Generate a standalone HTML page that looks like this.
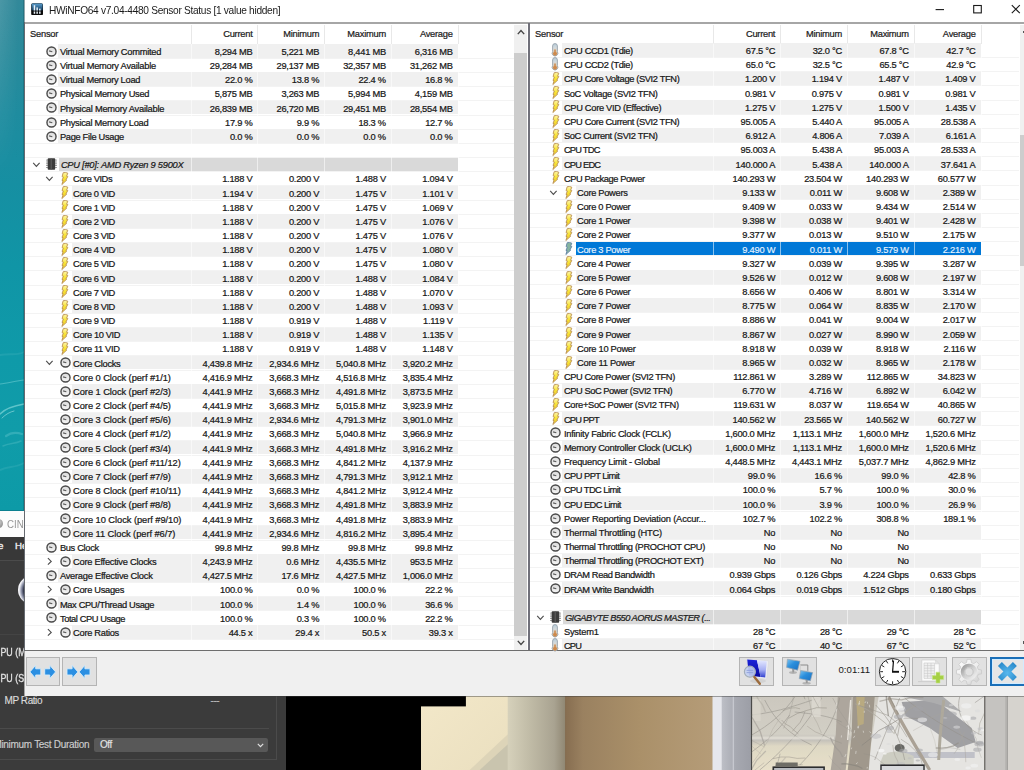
<!DOCTYPE html>
<html lang="en"><head><meta charset="utf-8"><title>HWiNFO64 v7.04-4480 Sensor Status</title>
<style>
html,body{margin:0;padding:0;background:#000;}
#root{position:relative;width:1024px;height:770px;overflow:hidden;background:#3b3b3b;font-family:"Liberation Sans","DejaVu Sans",sans-serif;}
#root div,#root svg{position:absolute;}
#win{left:0;top:0;width:1024px;height:770px;}
.wbg{left:24.3px;top:0;width:1000px;height:696.3px;background:#f0f0f0;}
.t{font-size:9.3px;letter-spacing:-0.25px;line-height:14.2px;height:14.2px;white-space:pre;color:#161616;-webkit-text-stroke:.22px #161616;}
.t.v{text-align:right;}
.t.it{font-style:italic;color:#1c1c1c;}
.t.w{color:#e8f4ff;-webkit-text-stroke:.15px #e8f4ff;}
.t.hdr{color:#1e1e1e;}
.st{background:#f0f0f0;}
.hd{background:#d9d9d9;}
.sel{background:#0078d7;}
.gl{height:1px;background:#f3f3f3;}
.cs{width:1px;background:rgba(255,255,255,.55);}
.hs{width:1px;background:#e8e8e8;}
.i{overflow:visible;}
.tb{background:#e1e1e1;box-shadow:inset 0 0 0 1px #b4b4b4;}
.tb.foc{background:#e6e6e6;box-shadow:inset 0 0 0 2px #1a6fb8,inset 0 0 0 3px #d2ecff;}
.cb{font-size:10px;line-height:14px;height:14px;white-space:pre;color:#dadada;letter-spacing:-.44px;-webkit-text-stroke:.15px currentColor;}
.cbb{font-size:10.2px;letter-spacing:0;transform:scaleX(.87);transform-origin:0 0;color:#e2e2e2;-webkit-text-stroke:.3px #e2e2e2;}

</style></head><body>
<div id="root">
<!-- desktop wallpaper strip -->
<div id="sea" style="left:0;top:0;width:25px;height:511.2px;background:linear-gradient(180deg,#32899a 0%,#2a8a9b 10%,#1f8c9f 22%,#168fa2 36%,#1095a6 52%,#0f9aa9 70%,#109ca9 85%,#0d9aa7 100%)"></div>
<div style="left:0;top:0;width:25px;height:180px;background:linear-gradient(90deg,rgba(255,255,255,.12),rgba(255,255,255,0) 75%);-webkit-mask-image:linear-gradient(180deg,#000,transparent);mask-image:linear-gradient(180deg,#000,transparent)"></div>
<svg style="left:0;top:330px" width="25" height="181" viewBox="0 330 25 181">
<g fill="none" stroke-linecap="round">
<path d="M0 384 C8 383,16 381,24 380" stroke="#5fc4cc" stroke-width="1.1" opacity=".7"/>
<path d="M0 414 C5 409,12 406,24 404" stroke="#7ad2d6" stroke-width="1.6" opacity=".75"/>
<path d="M2 418 C6 414,10 412,14 411" stroke="#a4e0e2" stroke-width="1" opacity=".6"/>
<path d="M6 436 C10 433,16 432,22 434" stroke="#4fbcc4" stroke-width="2.2" opacity=".55"/>
<path d="M3 446 C9 443,15 444,21 441" stroke="#48b8c0" stroke-width="1.6" opacity=".5"/>
<path d="M0 470 C8 466,15 468,24 463" stroke="#3ab0ba" stroke-width="2" opacity=".4"/>
<path d="M0 355 C10 353,18 356,24 352" stroke="#38acb8" stroke-width="2" opacity=".4"/>
</g></svg>
<div style="left:22.6px;top:0;width:1.6px;height:511px;background:linear-gradient(90deg,rgba(0,40,50,0),rgba(0,40,50,.45))"></div>
<!-- cinebench window behind -->
<div style="left:0;top:510.2px;width:25px;height:1.1px;background:#0c8090"></div>
<div style="left:0;top:511.2px;width:25px;height:26px;background:#fcfcfc"></div>
<div style="left:-5px;top:519px;width:8px;height:9px;border-radius:50%;background:radial-gradient(circle at 40% 35%,#d8d8d8,#777)"></div>
<div style="left:6.6px;top:517.7px;font-size:10.3px;line-height:14px;color:#969696;white-space:pre;transform:scaleX(.94);transform-origin:0 0">CINEBENCH R23.200</div>
<div style="left:0;top:537.2px;width:300px;height:23px;background:#383838"></div>
<div style="left:-17.2px;top:538.9px;width:20.4px;text-align:right;font-size:9.7px;line-height:14px;color:#f0f0f0;white-space:pre;-webkit-text-stroke:.35px #f0f0f0;letter-spacing:-.1px">File</div>
<div style="left:15px;top:538.9px;font-size:9.7px;line-height:14px;color:#f0f0f0;white-space:pre;-webkit-text-stroke:.35px #f0f0f0;letter-spacing:-.1px">Help</div>
<div style="left:0;top:560.2px;width:300px;height:1px;background:#4b4b4b"></div>
<div style="left:0;top:561.2px;width:286px;height:210px;background:#3b3b3b"></div>
<div style="left:17.6px;top:575.6px;width:28px;height:28px;border-radius:50%;background:radial-gradient(circle at 62% 52%,#1c2238 0%,#10142a 48%,#8e93a8 62%,#f4f4f8 72%)"></div>
<div style="left:0;top:634px;width:286px;height:1px;background:#444"></div>
<div class="cb cbb" style="left:-5.9px;top:646.3px">CPU (Multi Core)</div>
<div class="cb cbb" style="left:-5.9px;top:672px">CPU (Single Core)</div>
<div class="cb" style="left:4.6px;top:693.6px">MP Ratio</div>
<div class="cb" style="left:210.6px;top:693.6px;color:#b8b8b8">---</div>
<div style="left:0;top:728px;width:268.5px;height:1px;background:#4b4b4b"></div>
<div style="left:0;top:759px;width:277px;height:1px;background:#4b4b4b"></div>
<div style="left:276.2px;top:640px;width:1px;height:119.5px;background:#4b4b4b"></div>
<div class="cb" style="left:-30px;width:119.2px;text-align:right;top:738.2px;color:#cdcdcd;letter-spacing:-.3px">Minimum Test Duration</div>
<div style="left:94.4px;top:737.9px;width:173.2px;height:13.8px;border-radius:2.2px;background:#585858"></div>
<div class="cb" style="left:100px;top:738.2px;color:#e4e4e4">Off</div>
<svg style="left:256.8px;top:742.6px" width="7" height="5" viewBox="0 0 7 5"><path d="M0.8 0.8 L3.5 3.6 L6.2 0.8" fill="none" stroke="#e0e0e0" stroke-width="1.2"/></svg>
<!-- black area -->
<div style="left:286px;top:560px;width:135.3px;height:211px;background:#000"></div>
<!-- photo -->
<svg id="photo" style="left:421.3px;top:690px" width="603" height="80" viewBox="421.3 690 603 80" preserveAspectRatio="none">
<defs>
<linearGradient id="pc" x1="0" y1="0" x2="1" y2="0"><stop offset="0" stop-color="#d6d1bb"/><stop offset=".35" stop-color="#c2bda8"/><stop offset=".8" stop-color="#a9a391"/><stop offset="1" stop-color="#8f8672"/></linearGradient>
<linearGradient id="pb" x1="0" y1="0" x2="1" y2="0"><stop offset="0" stop-color="#866d50"/><stop offset=".12" stop-color="#9a8160"/><stop offset=".5" stop-color="#aa9069"/><stop offset="1" stop-color="#b59c78"/></linearGradient>
<linearGradient id="pf" x1="0" y1="0" x2="1" y2="0"><stop offset="0" stop-color="#bdbfc6"/><stop offset=".5" stop-color="#a6a8b0"/><stop offset="1" stop-color="#9c9ea6"/></linearGradient>
<linearGradient id="ps" x1="0" y1="0" x2="0" y2="1"><stop offset="0" stop-color="#c6c2b8"/><stop offset=".55" stop-color="#cfcbc0"/><stop offset=".62" stop-color="#bdbab4"/><stop offset=".7" stop-color="#dcd5bf"/><stop offset="1" stop-color="#e6dec6"/></linearGradient>
<linearGradient id="pcr" x1="0" y1="0" x2="1" y2="1"><stop offset="0" stop-color="#f3e8c9"/><stop offset="1" stop-color="#eadfbf"/></linearGradient>
<clipPath id="scn"><rect x="752.4" y="690" width="232" height="80"/></clipPath>
</defs>
<rect x="421.3" y="690" width="90" height="80" fill="url(#pcr)"/>
<path d="M478 770 L508.5 742 L508.5 770 Z" fill="#c9c4ae"/>
<path d="M470 770 L508.5 734 L508.5 744 L480 770 Z" fill="#ddd4b8"/>
<rect x="421.3" y="690" width="44.9" height="16.4" fill="#000"/>
<rect x="508" y="690" width="58" height="80" fill="url(#pc)"/>
<rect x="565.4" y="690" width="148" height="80" fill="url(#pb)"/>
<rect x="712.8" y="690" width="9.6" height="80" fill="#e6e7ec"/>
<rect x="722" y="690" width="29.6" height="80" fill="url(#pf)"/>
<rect x="733" y="690" width="1.2" height="80" fill="#c9cbd2"/>
<!-- outside scene -->
<rect x="751.2" y="690" width="233.6" height="80" fill="url(#ps)"/>
<rect x="751.2" y="690" width="1.2" height="80" fill="#4a4a48"/>
<!-- right snowy part -->
<path d="M880 690 H984.8 V770 H868 L872 740 Z" fill="#e3e2df"/>
<path d="M902 702 L936 700 L972 728 L976 742 L958 748 L930 728 L906 716 Z" fill="#8b8b90" opacity=".85"/>
<path d="M900 696 L940 694 L962 712 L934 703 Z" fill="#a6a6a8"/>
<path d="M905 752 H975 V758 H905 Z" fill="#a9adb8" opacity=".7"/>
<ellipse cx="900" cy="748" rx="5" ry="4" fill="#5c5c58"/>
<path d="M884 754 q14 -6 30 2 v8 h-34 z" fill="#c9c9bd"/>
<!-- trunks -->
<path d="M838 697 L852 697 L850 730 L846 770 L831 770 L836 735 Z" fill="#a69f95"/>
<path d="M853 697 L875 697 L872 735 L869 770 L848 770 L852 735 Z" fill="#989083"/>
<path d="M856.5 697 H865 L864 724 L858 726 Z" fill="#b3a376"/>
<path d="M848 740 L851 700" stroke="#e6e2da" stroke-width="1.4"/>
<path d="M889 697 C 897 715, 912 740, 930 770" stroke="#a39a8c" stroke-width="3.2" fill="none"/>
<path d="M944 700 C 942 720, 940 735, 939 760" stroke="#a8a294" stroke-width="3" fill="none"/>
<!-- branches -->
<g stroke="#8d8981" stroke-width="0.8" fill="none" opacity=".7">
<path d="M752 715 C 780 712, 800 704, 822 697"/><path d="M752 735 C 770 725, 785 712, 795 697"/>
<path d="M760 770 C 790 745, 810 720, 822 698"/><path d="M800 765 C 820 745, 835 720, 840 698"/>
<path d="M795 712 C 815 714, 830 716, 842 722"/><path d="M765 700 C 775 720, 790 735, 812 745"/>
<path d="M876 705 C 890 720, 900 735, 905 760"/><path d="M875 760 C 885 735, 893 715, 900 698"/>
<path d="M905 698 C 925 715, 950 730, 980 745"/><path d="M960 697 C 955 715, 968 730, 982 735"/>
<path d="M752 752 C 765 742, 775 735, 790 715"/>
</g>
<rect x="753" y="699" width="8" height="22" fill="#d7d3c8" opacity=".8"/><rect x="812" y="697" width="9" height="20" fill="#d9d6cc" opacity=".85"/><rect x="752.4" y="736.5" width="82" height="3" fill="#dedbd2" opacity=".8"/><g id="xb" clip-path="url(#scn)"><path d="M827.1 708.0 L817.0 707.7 L807.2 710.4 L797.6 713.5 L788.7 718.4" stroke="#8a857c" stroke-width="0.80" opacity="0.67" fill="none"/><path d="M879.8 701.3 L890.7 698.7 L901.7 699.8 L912.6 697.3 L923.7 697.7" stroke="#8a857c" stroke-width="1.30" opacity="0.55" fill="none"/><path d="M819.2 707.5 L812.9 696.1 L805.6 685.3 L798.6 674.2 L788.7 665.7" stroke="#8a857c" stroke-width="0.70" opacity="0.55" fill="none"/><path d="M765.8 712.0 L762.8 704.9 L758.2 698.6 L754.9 691.5 L749.8 685.6" stroke="#a39e94" stroke-width="1.30" opacity="0.48" fill="none"/><path d="M821.7 733.1 L817.5 723.1 L812.2 713.6 L810.0 702.9 L807.2 692.4" stroke="#8a857c" stroke-width="0.60" opacity="0.53" fill="none"/><path d="M975.2 702.7 L985.9 695.2 L996.5 687.4 L1008.5 682.3 L1021.6 681.2" stroke="#7f7a72" stroke-width="0.80" opacity="0.56" fill="none"/><path d="M862.0 745.5 L870.9 738.5 L878.9 730.6 L889.0 725.5 L898.6 719.5" stroke="#7f7a72" stroke-width="1.00" opacity="0.60" fill="none"/><path d="M893.7 733.0 L886.1 723.4 L876.5 715.9 L866.4 709.0 L855.3 703.7" stroke="#a39e94" stroke-width="1.00" opacity="0.67" fill="none"/><path d="M783.8 728.4 L789.8 714.9 L793.3 700.4 L794.0 685.6 L794.6 670.7" stroke="#96918a" stroke-width="1.00" opacity="0.40" fill="none"/><path d="M888.7 716.2 L887.7 707.9 L886.7 699.5 L886.5 691.2 L887.3 682.8" stroke="#7f7a72" stroke-width="1.30" opacity="0.68" fill="none"/><path d="M764.5 762.7 L754.4 770.7 L743.7 777.7 L735.5 787.7 L730.7 799.6" stroke="#a39e94" stroke-width="1.00" opacity="0.49" fill="none"/><path d="M800.4 708.8 L796.1 707.8 L791.6 708.0 L787.2 709.2 L783.0 710.7" stroke="#8a857c" stroke-width="0.70" opacity="0.68" fill="none"/><path d="M899.2 766.7 L898.0 761.2 L895.4 756.1 L893.8 750.6 L893.1 744.9" stroke="#a39e94" stroke-width="1.00" opacity="0.52" fill="none"/><path d="M863.0 747.5 L854.4 735.9 L848.1 722.8 L839.9 710.9 L833.0 698.1" stroke="#96918a" stroke-width="0.80" opacity="0.59" fill="none"/><path d="M773.1 758.7 L781.2 757.0 L789.4 757.0 L797.5 758.4 L805.7 758.0" stroke="#7f7a72" stroke-width="0.70" opacity="0.57" fill="none"/><path d="M807.5 726.2 L815.5 731.8 L824.4 735.5 L833.0 739.9 L842.1 743.3" stroke="#8a857c" stroke-width="0.60" opacity="0.63" fill="none"/><path d="M939.6 749.8 L944.8 748.8 L950.1 747.7 L955.4 748.4 L960.6 749.5" stroke="#96918a" stroke-width="0.60" opacity="0.51" fill="none"/><path d="M752.4 763.4 L760.2 752.6 L767.8 741.7 L772.8 729.4 L780.1 718.4" stroke="#a39e94" stroke-width="0.60" opacity="0.62" fill="none"/><path d="M829.1 755.5 L834.0 762.7 L840.4 768.6 L845.0 776.0 L847.8 784.2" stroke="#96918a" stroke-width="0.60" opacity="0.41" fill="none"/><path d="M785.9 757.3 L780.6 763.6 L774.4 768.9 L769.9 775.7 L764.3 781.7" stroke="#96918a" stroke-width="1.30" opacity="0.36" fill="none"/><path d="M784.3 769.0 L789.0 768.0 L793.5 766.4 L798.1 765.0 L802.9 764.7" stroke="#7f7a72" stroke-width="0.70" opacity="0.53" fill="none"/><path d="M766.1 751.0 L757.0 760.3 L750.5 771.7 L747.0 784.3 L743.4 796.8" stroke="#a39e94" stroke-width="1.30" opacity="0.64" fill="none"/><path d="M954.5 753.7 L957.9 748.7 L959.7 742.9 L962.2 737.3 L964.8 731.8" stroke="#a39e94" stroke-width="0.70" opacity="0.57" fill="none"/><path d="M863.9 753.7 L870.3 755.1 L876.3 757.7 L881.3 761.8 L886.5 765.8" stroke="#8a857c" stroke-width="0.60" opacity="0.53" fill="none"/><path d="M894.1 733.9 L898.0 725.5 L901.9 717.1 L908.0 710.1 L915.8 705.2" stroke="#a39e94" stroke-width="1.30" opacity="0.53" fill="none"/><path d="M966.1 762.2 L965.7 753.3 L964.8 744.5 L962.3 736.0 L958.5 727.9" stroke="#a39e94" stroke-width="1.00" opacity="0.46" fill="none"/><path d="M780.4 753.7 L778.3 761.8 L773.8 768.8 L769.8 776.1 L765.8 783.5" stroke="#96918a" stroke-width="0.80" opacity="0.69" fill="none"/><path d="M981.7 757.8 L978.3 748.4 L976.5 738.7 L971.5 730.1 L966.9 721.3" stroke="#a39e94" stroke-width="0.80" opacity="0.42" fill="none"/><path d="M854.2 698.3 L859.7 690.1 L867.6 684.1 L873.5 676.2 L878.1 667.5" stroke="#8a857c" stroke-width="0.60" opacity="0.69" fill="none"/><path d="M761.2 753.9 L754.4 748.1 L747.8 742.0 L742.2 735.1 L734.8 730.0" stroke="#a39e94" stroke-width="0.80" opacity="0.40" fill="none"/><path d="M765.3 747.2 L752.6 740.7 L738.5 738.2 L725.4 732.2 L712.1 726.7" stroke="#7f7a72" stroke-width="0.60" opacity="0.38" fill="none"/><path d="M830.7 737.4 L833.0 742.8 L836.1 747.7 L840.3 751.8 L843.0 757.0" stroke="#96918a" stroke-width="1.30" opacity="0.68" fill="none"/><path d="M897.9 735.8 L899.9 724.4 L898.2 713.0 L892.8 702.7 L887.4 692.5" stroke="#7f7a72" stroke-width="0.80" opacity="0.63" fill="none"/><path d="M978.9 734.5 L980.1 723.2 L984.9 712.8 L988.3 701.9 L989.5 690.6" stroke="#a39e94" stroke-width="1.00" opacity="0.54" fill="none"/><path d="M805.3 711.5 L803.1 717.0 L800.4 722.4 L796.4 726.8 L792.6 731.4" stroke="#8a857c" stroke-width="0.80" opacity="0.64" fill="none"/><path d="M764.9 745.6 L760.5 731.5 L753.2 718.8 L744.0 707.4 L731.4 699.8" stroke="#96918a" stroke-width="1.30" opacity="0.59" fill="none"/><path d="M836.5 721.0 L840.3 724.0 L844.4 726.7 L848.5 729.3 L852.6 731.9" stroke="#96918a" stroke-width="0.80" opacity="0.47" fill="none"/><path d="M798.6 733.8 L794.4 730.4 L790.6 726.6 L785.8 724.0 L782.0 720.1" stroke="#8a857c" stroke-width="1.00" opacity="0.49" fill="none"/><path d="M950.0 708.3 L940.6 713.7 L930.8 718.1 L922.9 725.4 L913.4 730.6" stroke="#a39e94" stroke-width="0.80" opacity="0.40" fill="none"/><path d="M958.9 742.8 L953.8 745.8 L948.0 747.3 L942.1 748.1 L936.1 748.0" stroke="#8a857c" stroke-width="1.30" opacity="0.64" fill="none"/><path d="M805.3 699.3 L803.4 694.0 L802.2 688.5 L800.9 683.1 L797.9 678.4" stroke="#8a857c" stroke-width="1.00" opacity="0.57" fill="none"/><path d="M937.1 751.6 L934.9 740.4 L931.0 729.7 L928.8 718.5 L924.4 707.9" stroke="#a39e94" stroke-width="0.60" opacity="0.44" fill="none"/><path d="M923.6 768.2 L921.1 759.0 L916.0 751.0 L909.1 744.4 L901.2 739.2" stroke="#8a857c" stroke-width="0.80" opacity="0.57" fill="none"/><path d="M924.4 719.2 L919.4 718.4 L914.2 718.3 L909.1 718.2 L903.9 718.2" stroke="#8a857c" stroke-width="0.80" opacity="0.59" fill="none"/><path d="M860.2 705.7 L874.2 710.4 L888.1 715.3 L899.6 724.6 L907.3 737.2" stroke="#8a857c" stroke-width="1.00" opacity="0.45" fill="none"/><path d="M841.7 763.9 L847.2 763.8 L852.5 764.9 L857.9 766.0 L862.7 768.5" stroke="#7f7a72" stroke-width="1.30" opacity="0.68" fill="none"/><ellipse cx="952.0" cy="713.9" rx="5.1" ry="2.5" fill="#9c9ca0" opacity=".55"/><ellipse cx="918.6" cy="708.6" rx="5.3" ry="2.6" fill="#9c9ca0" opacity=".55"/><ellipse cx="919.8" cy="750.1" rx="3.4" ry="1.7" fill="#9c9ca0" opacity=".55"/><ellipse cx="910.1" cy="758.3" rx="1.9" ry="1.0" fill="#b8b8bc" opacity=".55"/><ellipse cx="966.6" cy="705.8" rx="5.2" ry="2.6" fill="#f4f4f4" opacity=".55"/><ellipse cx="973.4" cy="718.2" rx="3.2" ry="1.6" fill="#9c9ca0" opacity=".55"/><ellipse cx="918.1" cy="760.5" rx="2.2" ry="1.1" fill="#9c9ca0" opacity=".55"/><ellipse cx="957.6" cy="759.4" rx="2.9" ry="1.5" fill="#f4f4f4" opacity=".55"/><ellipse cx="966.1" cy="717.9" rx="5.2" ry="2.6" fill="#ffffff" opacity=".55"/><ellipse cx="980.9" cy="728.8" rx="3.0" ry="1.5" fill="#b8b8bc" opacity=".55"/><ellipse cx="960.8" cy="728.2" rx="2.0" ry="1.0" fill="#9c9ca0" opacity=".55"/><ellipse cx="974.6" cy="765.7" rx="3.9" ry="1.9" fill="#f4f4f4" opacity=".55"/><ellipse cx="881.3" cy="750.5" rx="3.5" ry="1.8" fill="#ffffff" opacity=".55"/><ellipse cx="945.6" cy="717.9" rx="2.1" ry="1.0" fill="#d8d8d8" opacity=".55"/><ellipse cx="889.7" cy="731.5" rx="3.1" ry="1.6" fill="#b8b8bc" opacity=".55"/><ellipse cx="903.6" cy="750.9" rx="4.2" ry="2.1" fill="#9c9ca0" opacity=".55"/><ellipse cx="946.8" cy="719.0" rx="3.9" ry="1.9" fill="#9c9ca0" opacity=".55"/><ellipse cx="888.9" cy="744.0" rx="2.2" ry="1.1" fill="#d8d8d8" opacity=".55"/><ellipse cx="973.8" cy="733.3" rx="2.7" ry="1.3" fill="#b8b8bc" opacity=".55"/><ellipse cx="983.6" cy="729.8" rx="2.4" ry="1.2" fill="#ffffff" opacity=".55"/><ellipse cx="902.4" cy="709.8" rx="3.9" ry="1.9" fill="#b8b8bc" opacity=".55"/><ellipse cx="901.8" cy="715.9" rx="3.9" ry="2.0" fill="#f4f4f4" opacity=".55"/><ellipse cx="957.0" cy="727.1" rx="3.4" ry="1.7" fill="#d8d8d8" opacity=".55"/><ellipse cx="898.7" cy="716.7" rx="4.6" ry="2.3" fill="#9c9ca0" opacity=".55"/><ellipse cx="906.0" cy="767.6" rx="2.4" ry="1.2" fill="#d8d8d8" opacity=".55"/><ellipse cx="933.2" cy="754.7" rx="4.9" ry="2.5" fill="#f4f4f4" opacity=".55"/><ellipse cx="905.3" cy="715.1" rx="3.3" ry="1.7" fill="#9c9ca0" opacity=".55"/><ellipse cx="922.6" cy="719.8" rx="4.8" ry="2.4" fill="#f4f4f4" opacity=".55"/><ellipse cx="889.7" cy="728.0" rx="4.6" ry="2.3" fill="#9c9ca0" opacity=".55"/><ellipse cx="980.6" cy="732.8" rx="2.2" ry="1.1" fill="#d8d8d8" opacity=".55"/><ellipse cx="968.4" cy="768.0" rx="2.8" ry="1.4" fill="#f4f4f4" opacity=".55"/><ellipse cx="900.2" cy="708.1" rx="5.3" ry="2.7" fill="#f4f4f4" opacity=".55"/><ellipse cx="977.7" cy="749.7" rx="4.2" ry="2.1" fill="#9c9ca0" opacity=".55"/><ellipse cx="885.2" cy="753.7" rx="1.9" ry="1.0" fill="#ffffff" opacity=".55"/><ellipse cx="901.1" cy="764.2" rx="4.2" ry="2.1" fill="#b8b8bc" opacity=".55"/><ellipse cx="979.9" cy="742.7" rx="3.8" ry="1.9" fill="#9c9ca0" opacity=".55"/><ellipse cx="951.4" cy="705.2" rx="2.2" ry="1.1" fill="#d8d8d8" opacity=".55"/><ellipse cx="977.9" cy="711.0" rx="2.8" ry="1.4" fill="#d8d8d8" opacity=".55"/><ellipse cx="876.1" cy="736.2" rx="5.4" ry="2.7" fill="#b8b8bc" opacity=".55"/><ellipse cx="979.6" cy="744.1" rx="5.0" ry="2.5" fill="#9c9ca0" opacity=".55"/><path d="M855.1 735.8 l-1.4 2.3" stroke="#e9e6df" stroke-width="0.8" opacity=".7"/><path d="M860.0 700.9 l-0.9 3.3" stroke="#e9e6df" stroke-width="0.8" opacity=".7"/><path d="M859.9 702.8 l-0.8 2.3" stroke="#e9e6df" stroke-width="0.8" opacity=".7"/><path d="M848.8 732.0 l0.6 2.9" stroke="#e9e6df" stroke-width="0.8" opacity=".7"/><path d="M848.5 725.1 l-1.5 2.1" stroke="#e9e6df" stroke-width="0.8" opacity=".7"/><path d="M867.8 701.8 l-0.0 1.9" stroke="#e9e6df" stroke-width="0.8" opacity=".7"/><path d="M864.6 710.8 l-0.1 2.0" stroke="#e9e6df" stroke-width="0.8" opacity=".7"/><path d="M869.6 704.7 l0.4 2.7" stroke="#e9e6df" stroke-width="0.8" opacity=".7"/><path d="M869.9 731.4 l1.2 1.6" stroke="#e9e6df" stroke-width="0.8" opacity=".7"/><path d="M857.8 762.5 l-1.3 1.5" stroke="#e9e6df" stroke-width="0.8" opacity=".7"/><path d="M857.8 726.5 l0.6 1.9" stroke="#e9e6df" stroke-width="0.8" opacity=".7"/><path d="M852.0 747.6 l-0.6 1.7" stroke="#e9e6df" stroke-width="0.8" opacity=".7"/><path d="M837.2 708.8 l-0.9 2.8" stroke="#e9e6df" stroke-width="0.8" opacity=".7"/><path d="M855.0 730.2 l-0.6 3.0" stroke="#e9e6df" stroke-width="0.8" opacity=".7"/><path d="M867.6 766.9 l-0.2 1.7" stroke="#e9e6df" stroke-width="0.8" opacity=".7"/><path d="M837.1 702.7 l-0.2 3.3" stroke="#e9e6df" stroke-width="0.8" opacity=".7"/><path d="M856.4 750.9 l-0.4 3.0" stroke="#e9e6df" stroke-width="0.8" opacity=".7"/><path d="M846.3 754.1 l-1.2 2.9" stroke="#e9e6df" stroke-width="0.8" opacity=".7"/><path d="M841.8 735.4 l-0.2 2.1" stroke="#e9e6df" stroke-width="0.8" opacity=".7"/><path d="M863.5 730.7 l0.4 2.0" stroke="#e9e6df" stroke-width="0.8" opacity=".7"/><path d="M859.0 725.7 l-0.4 2.4" stroke="#e9e6df" stroke-width="0.8" opacity=".7"/><path d="M866.1 701.4 l-0.9 1.6" stroke="#e9e6df" stroke-width="0.8" opacity=".7"/></g>
<rect x="752.4" y="690" width="232" height="80" fill="#fff" opacity=".08"/>
<!-- monitors at bottom edge -->
<rect x="772.8" y="766.4" width="52.4" height="5" fill="#2c2c2e"/><rect x="774.4" y="768" width="49.2" height="3" fill="#b9bbc0"/>
<rect x="880.6" y="764.4" width="44.4" height="7" fill="#2c2c2e"/><rect x="882" y="766" width="41.6" height="5" fill="#d8d9dc"/>
<rect x="776" y="762.5" width="22" height="4" fill="#6f6d66"/>
<!-- right frame -->
<rect x="984.4" y="690" width="1.2" height="80" fill="#6e6c68"/>
<rect x="985.6" y="690" width="21.4" height="80" fill="#c5c3c0"/>
<rect x="1005.6" y="690" width="2.4" height="80" fill="#b3b1ae"/>
<rect x="1008" y="690" width="17" height="80" fill="#d6d3ce"/>
</svg>

<div id="win">
<svg width="0" height="0" style="left:0;top:0"><defs><linearGradient id="bg" x1="0" y1="0" x2="0" y2="1"><stop offset="0" stop-color="#fff7ae"/><stop offset=".45" stop-color="#f8e436"/><stop offset=".8" stop-color="#f2d22c"/><stop offset="1" stop-color="#e2a646"/></linearGradient><linearGradient id="cg" x1="0" y1="0" x2="0" y2="1"><stop offset="0" stop-color="#dadada"/><stop offset="1" stop-color="#f6f6f6"/></linearGradient><linearGradient id="tg" x1="0" y1="0" x2="0" y2="1"><stop offset="0" stop-color="#b6ccda"/><stop offset=".35" stop-color="#d4dadc"/><stop offset=".6" stop-color="#dcd4c4"/><stop offset="1" stop-color="#d9a672"/></linearGradient></defs></svg>
<div class="wbg"></div>
<div id="wsh" style="left:24.3px;top:696.1px;width:1000px;height:1px;background:rgba(60,60,60,.45)"></div>
<!-- title bar -->
<div style="left:24.3px;top:0;width:1000px;height:22.2px;background:#fff"></div>
<svg style="left:31.4px;top:2.8px" width="12.2" height="12.6" viewBox="0 0 12.2 12.6">
<defs><linearGradient id="hw" x1="0" y1="0" x2="0" y2="1"><stop offset="0" stop-color="#5a9fd0"/><stop offset="1" stop-color="#123a5c"/></linearGradient></defs>
<rect x="0.2" y="0.2" width="11.8" height="12.2" rx="1.6" fill="#0a0a0a"/>
<rect x="0.6" y="0.5" width="11" height="7.2" rx="1.2" fill="url(#hw)"/>
<rect x="2.7" y="2.2" width="1.5" height="8.6" fill="#e8f2fa"/><rect x="5.4" y="4.4" width="1.5" height="6.4" fill="#e8f2fa"/><rect x="8.1" y="5.6" width="1.5" height="5.2" fill="#e8f2fa"/>
<rect x="0.6" y="7.6" width="11" height="0.9" fill="#0a0a0a"/>
</svg>
<div style="left:48.7px;top:2.6px;font-size:10.8px;line-height:14px;height:14px;white-space:pre;color:#1a1a1a;letter-spacing:-0.325px;transform:scaleX(.94);transform-origin:0 0" id="ttl">HWiNFO64 v7.04-4480 Sensor Status [1 value hidden]</div>
<!-- window buttons -->
<svg style="left:930px;top:0" width="94" height="20" viewBox="0 0 94 20">
<path d="M5.6 9.6 H14" stroke="#1a1a1a" stroke-width="1.1" fill="none"/>
<rect x="43.7" y="5.5" width="7.6" height="7.4" stroke="#1a1a1a" stroke-width="1.1" fill="none"/>
<path d="M81.8 5.2 L89.8 13.2 M89.8 5.2 L81.8 13.2" stroke="#1a1a1a" stroke-width="1.1" fill="none"/>
</svg>
<!-- list frames -->
<div style="left:24.3px;top:22px;width:1000px;height:1.9px;background:#a6a6a6"></div>
<div style="left:24.3px;top:23.9px;width:503.8px;height:626.4px;background:#fff"></div>
<div style="left:529.8px;top:23.9px;width:495px;height:626.4px;background:#fff"></div>
<div style="left:528.1px;top:23px;width:1.7px;height:627.6px;background:#70707a"></div>
<div style="left:24.3px;top:650.1px;width:1000px;height:1.1px;background:#6e6e6e"></div>
<div style="left:23.7px;top:0;width:1.3px;height:22px;background:#8ea6ab"></div>
<div style="left:23.7px;top:22px;width:1.4px;height:628.6px;background:#666a70"></div>
<div style="left:23.7px;top:650.6px;width:1.2px;height:45.8px;background:#a4a4a4"></div>
<!-- left scrollbar -->
<div style="left:514px;top:24.5px;width:13.2px;height:625.6px;background:#f0f0f0"></div>
<div style="left:514px;top:52.7px;width:13.2px;height:583.2px;background:#cdcdcd"></div>
<svg style="left:516.8px;top:28.6px" width="8" height="6" viewBox="0 0 8 6"><path d="M0.8 5.1 L4 1.6 L7.2 5.1" fill="none" stroke="#444" stroke-width="1.4"/></svg>
<svg style="left:516.8px;top:640.4px" width="8" height="6" viewBox="0 0 8 6"><path d="M0.8 0.9 L4 4.4 L7.2 0.9" fill="none" stroke="#444" stroke-width="1.4"/></svg>
<!-- right scrollbar (cropped) -->
<div style="left:1019.6px;top:24.5px;width:5px;height:625.6px;background:#f0f0f0"></div>
<div style="left:1019.6px;top:134.6px;width:5px;height:131.2px;background:#cdcdcd"></div>
<div style="left:1022.6px;top:30.5px;width:2px;height:2.6px;background:#555"></div>
<div style="left:1022.6px;top:641px;width:2px;height:2.6px;background:#555"></div>
<!-- toolbar buttons -->
<div class="tb" style="left:25.6px;top:656.8px;width:34.1px;height:28.9px"></div>
<div class="tb" style="left:62px;top:656.8px;width:34.6px;height:28.9px"></div>
<div class="tb" style="left:739px;top:656.8px;width:35px;height:28.9px"></div>
<div class="tb" style="left:782.3px;top:656.8px;width:35.2px;height:28.9px"></div>
<div class="tb" style="left:875px;top:656.8px;width:34.9px;height:28.9px"></div>
<div class="tb" style="left:912.4px;top:656.8px;width:35px;height:28.9px"></div>
<div class="tb" style="left:951.5px;top:656.8px;width:35px;height:28.9px"></div>
<div class="tb foc" style="left:989.8px;top:656.8px;width:36px;height:28.9px"></div>
<div style="left:838.4px;top:663.2px;font-size:9.6px;line-height:14px;height:14px;white-space:pre;color:#1a1a1a;letter-spacing:0.05px" id="tmr">0:01:11</div>
<!-- TBICONS -->
<svg style="left:0;top:652px" width="1024" height="40" viewBox="0 652 1024 40">
<defs>
<linearGradient id="gg" x1="0" y1="0" x2="1" y2="1"><stop offset="0" stop-color="#fdfdfd"/><stop offset=".6" stop-color="#ececec"/><stop offset="1" stop-color="#c4c4c4"/></linearGradient>
<linearGradient id="gr" x1="0" y1="0" x2="1" y2="1"><stop offset="0" stop-color="#9a9a9a"/><stop offset=".5" stop-color="#cfcfcf"/><stop offset="1" stop-color="#f0f0f0"/></linearGradient>
<radialGradient id="gx" cx="0.55" cy="0.55" r="0.6"><stop offset="0" stop-color="#58b8ee"/><stop offset="1" stop-color="#2686c8"/></radialGradient>
<linearGradient id="gs1" x1="0" y1="0" x2="0" y2="1"><stop offset="0" stop-color="#e4e8ff"/><stop offset=".55" stop-color="#a8b0f4"/><stop offset="1" stop-color="#3040d0"/></linearGradient>
<linearGradient id="gs2" x1="0" y1="0" x2="0" y2="1"><stop offset="0" stop-color="#1a22d8"/><stop offset="1" stop-color="#0808a0"/></linearGradient>
<linearGradient id="gm" x1="0" y1="0" x2="1" y2="1"><stop offset="0" stop-color="#7cc4f0"/><stop offset=".45" stop-color="#2a8edc"/><stop offset="1" stop-color="#1a6fc0"/></linearGradient>
</defs>
<path d="M29.9 671.9 L35.7 665.3 L35.7 668.8 L40.8 668.8 L40.8 675.0 L35.7 675.0 L35.7 678.5 Z M55.6 671.9 L49.8 665.3 L49.8 668.8 L44.7 668.8 L44.7 675.0 L49.8 675.0 L49.8 678.5 Z M77.9 671.9 L72.1 665.3 L72.1 668.8 L67.0 668.8 L67.0 675.0 L72.1 675.0 L72.1 678.5 Z M79.1 671.9 L84.9 665.3 L84.9 668.8 L90.0 668.8 L90.0 675.0 L84.9 675.0 L84.9 678.5 Z" fill="#2b8fe2" stroke="#d6ecfb" stroke-width="0.9" stroke-linejoin="round"/>
<!-- summary icon -->
<ellipse cx="758" cy="681" rx="8" ry="2.2" fill="#d2d2d2"/>
<path d="M746.8 659 L768.6 660.8 L766.6 679.2 L748.6 676.8 Z" fill="#eeeef2" stroke="#d4d4da" stroke-width=".5"/>
<path d="M747.2 659.6 L757 660.3 L760.6 676.9 L749 675.6 Z" fill="url(#gs2)"/>
<path d="M757 660.3 L766.8 661.2 L765.2 677.4 L760.6 676.9 Z" fill="url(#gs1)"/>
<path d="M754.2 676.8 L759.8 683.8" stroke="#9c6b3c" stroke-width="2.4" stroke-linecap="round"/>
<circle cx="749.9" cy="671.7" r="5.5" fill="#c3d0f2" fill-opacity=".9" stroke="#a3adb8" stroke-width="1.2"/>
<path d="M746.6 670.4 H753.2 M746.6 672.6 H753.2" stroke="#8ea0dc" stroke-width="0.9"/>
<!-- network monitors -->
<path d="M800.3 665 H807.8 V671" stroke="#8a8a8a" stroke-width="1" fill="none"/>
<path d="M800.3 665 V671 H807.8" stroke="#c8c8c8" stroke-width="0.8" fill="none"/>
<ellipse cx="793" cy="672.6" rx="4" ry="1.3" fill="#b4b4b4"/><path d="M792 668 L794.6 668 L794 672.4 L792.4 672.4Z" fill="#9a9a9a"/>
<path d="M787.4 659.2 L800 661.2 L797.6 670.2 L786.6 667.4 Z" fill="url(#gm)" stroke="#9aa4ae" stroke-width="0.7"/>
<ellipse cx="806.6" cy="683.2" rx="4.2" ry="1.3" fill="#b4b4b4"/><path d="M805.4 679 L808 679 L807.6 683 L806 683Z" fill="#9a9a9a"/>
<path d="M800.6 670.6 L812.6 672.6 L810.4 680.8 L799.2 678.6 Z" fill="url(#gm)" stroke="#9aa4ae" stroke-width="0.7"/>
<!-- clock -->
<circle cx="892.6" cy="671.7" r="13.2" fill="#fff" stroke="#222" stroke-width="1"/><path d="M892.60 659.30 L892.60 662.10 M898.80 660.96 L897.40 663.39 M903.34 665.50 L900.91 666.90 M905.00 671.70 L902.20 671.70 M903.34 677.90 L900.91 676.50 M898.80 682.44 L897.40 680.01 M892.60 684.10 L892.60 681.30 M886.40 682.44 L887.80 680.01 M881.86 677.90 L884.29 676.50 M880.20 671.70 L883.00 671.70 M881.86 665.50 L884.29 666.90 M886.40 660.96 L887.80 663.39 " stroke="#2a2a2a" stroke-width="1" fill="none"/><path d="M892.6 671.7 L893.5 660.6" stroke="#111" stroke-width="1.2" fill="none"/><path d="M892.0 671.8 H899" stroke="#111" stroke-width="1.9" fill="none"/>
<!-- doc -->
<path d="M918 681.6 H940" stroke="#cfcfcf" stroke-width="1.2"/>
<path d="M921.8 660 H935.4 L939.2 663.8 V681 H921.8 Z" fill="#fbfbfb" stroke="#d0d0d0" stroke-width="0.7"/>
<path d="M935.4 660 V663.8 H939.2 Z" fill="#e2e2e2" stroke="#cfcfcf" stroke-width="0.5"/>
<path d="M924 663 H934.6 V678.4 H924 Z M924 665.6 H934.6 M924 668.2 H934.6 M924 670.8 H934.6 M924 673.4 H934.6 M924 676 H934.6 M927.6 663 V678.4 M931 663 V678.4" fill="#f0f0f0" stroke="#c9c9c9" stroke-width="0.6"/>
<path d="M936 672.2 H940 V675.6 H943.6 V679.6 H940 V683 H936 V679.6 H932.4 V675.6 H936 Z" fill="#a6d044" stroke="#c8e48c" stroke-width="0.6"/>
<!-- gear -->
<path d="M981.56 670.00 L981.56 673.80 L978.28 674.37 L977.31 676.71 L979.22 679.44 L976.54 682.12 L973.81 680.21 L971.47 681.18 L970.90 684.46 L967.10 684.46 L966.53 681.18 L964.19 680.21 L961.46 682.12 L958.78 679.44 L960.69 676.71 L959.72 674.37 L956.44 673.80 L956.44 670.00 L959.72 669.43 L960.69 667.09 L958.78 664.36 L961.46 661.68 L964.19 663.59 L966.53 662.62 L967.10 659.34 L970.90 659.34 L971.47 662.62 L973.81 663.59 L976.54 661.68 L979.22 664.36 L977.31 667.09 L978.28 669.43 Z" fill="url(#gg)" stroke="#c9c9c9" stroke-width="0.8" stroke-linejoin="round"/><circle cx="969.0" cy="671.9" r="6.4" fill="none" stroke="url(#gr)" stroke-width="3.6"/><circle cx="969.0" cy="671.9" r="4.2" fill="#e1e1e1" stroke="#aaa" stroke-width="0.6"/>
<!-- close X -->
<g transform="translate(1007.4 671.5) rotate(45)"><path d="M-10.6 -2.8 H-2.8 V-10.6 H2.8 V-2.8 H10.6 V2.8 H2.8 V10.6 H-2.8 V2.8 H-10.6 Z" fill="url(#gx)"/></g>
</svg>

<!-- left list -->
<div class="t hdr" style="left:30.1px;top:27.3px">Sensor</div>
<div class="t hdr v" style="left:191.2px;top:27.3px;width:61.3px">Current</div>
<div class="t hdr v" style="left:257.9px;top:27.3px;width:61.3px">Minimum</div>
<div class="t hdr v" style="left:324.6px;top:27.3px;width:61.3px">Maximum</div>
<div class="t hdr v" style="left:391.3px;top:27.3px;width:61.3px">Average</div>
<div class="hs" style="left:190.7px;top:25.0px;height:19.0px"></div>
<div class="hs" style="left:257.4px;top:25.0px;height:19.0px"></div>
<div class="hs" style="left:324.1px;top:25.0px;height:19.0px"></div>
<div class="hs" style="left:390.8px;top:25.0px;height:19.0px"></div>
<div class="hs" style="left:457.5px;top:25.0px;height:19.0px"></div>
<div class="gl" style="left:25.1px;top:57.82px;width:488.7px"></div>
<div class="st" style="left:58.3px;top:44.15px;width:399.7px;height:13.57px"></div>
<svg class="i" style="left:46.30px;top:45.65px" width="11" height="11" viewBox="0 0 11 11"><circle cx="5.5" cy="5.5" r="4.55" fill="url(#cg)" stroke="#484848" stroke-width="1.4"/><path d="M3.1 4.9 L6.3 5.7" stroke="#5c5c5c" stroke-width="1.1" fill="none"/></svg>
<div class="t" style="left:59.9px;top:44.90px;letter-spacing:-0.265px">Virtual Memory Commited</div>
<div class="t v" style="left:191.2px;top:44.90px;width:61.3px">8,294 MB</div>
<div class="t v" style="left:257.9px;top:44.90px;width:61.3px">5,221 MB</div>
<div class="t v" style="left:324.6px;top:44.90px;width:61.3px">8,441 MB</div>
<div class="t v" style="left:391.3px;top:44.90px;width:61.3px">6,316 MB</div>
<div class="gl" style="left:25.1px;top:71.99px;width:488.7px"></div>
<svg class="i" style="left:46.30px;top:59.82px" width="11" height="11" viewBox="0 0 11 11"><circle cx="5.5" cy="5.5" r="4.55" fill="url(#cg)" stroke="#484848" stroke-width="1.4"/><path d="M3.1 4.9 L6.3 5.7" stroke="#5c5c5c" stroke-width="1.1" fill="none"/></svg>
<div class="t" style="left:59.9px;top:59.07px;letter-spacing:-0.247px">Virtual Memory Available</div>
<div class="t v" style="left:191.2px;top:59.07px;width:61.3px">29,284 MB</div>
<div class="t v" style="left:257.9px;top:59.07px;width:61.3px">29,137 MB</div>
<div class="t v" style="left:324.6px;top:59.07px;width:61.3px">32,357 MB</div>
<div class="t v" style="left:391.3px;top:59.07px;width:61.3px">31,262 MB</div>
<div class="gl" style="left:25.1px;top:86.16px;width:488.7px"></div>
<div class="st" style="left:58.3px;top:72.49px;width:399.7px;height:13.57px"></div>
<svg class="i" style="left:46.30px;top:73.99px" width="11" height="11" viewBox="0 0 11 11"><circle cx="5.5" cy="5.5" r="4.55" fill="url(#cg)" stroke="#484848" stroke-width="1.4"/><path d="M3.1 4.9 L6.3 5.7" stroke="#5c5c5c" stroke-width="1.1" fill="none"/></svg>
<div class="t" style="left:59.9px;top:73.24px;letter-spacing:-0.280px">Virtual Memory Load</div>
<div class="t v" style="left:191.2px;top:73.24px;width:61.3px">22.0 %</div>
<div class="t v" style="left:257.9px;top:73.24px;width:61.3px">13.8 %</div>
<div class="t v" style="left:324.6px;top:73.24px;width:61.3px">22.4 %</div>
<div class="t v" style="left:391.3px;top:73.24px;width:61.3px">16.8 %</div>
<div class="gl" style="left:25.1px;top:100.33px;width:488.7px"></div>
<svg class="i" style="left:46.30px;top:88.16px" width="11" height="11" viewBox="0 0 11 11"><circle cx="5.5" cy="5.5" r="4.55" fill="url(#cg)" stroke="#484848" stroke-width="1.4"/><path d="M3.1 4.9 L6.3 5.7" stroke="#5c5c5c" stroke-width="1.1" fill="none"/></svg>
<div class="t" style="left:59.9px;top:87.41px;letter-spacing:-0.287px">Physical Memory Used</div>
<div class="t v" style="left:191.2px;top:87.41px;width:61.3px">5,875 MB</div>
<div class="t v" style="left:257.9px;top:87.41px;width:61.3px">3,263 MB</div>
<div class="t v" style="left:324.6px;top:87.41px;width:61.3px">5,994 MB</div>
<div class="t v" style="left:391.3px;top:87.41px;width:61.3px">4,159 MB</div>
<div class="gl" style="left:25.1px;top:114.50px;width:488.7px"></div>
<div class="st" style="left:58.3px;top:100.83px;width:399.7px;height:13.57px"></div>
<svg class="i" style="left:46.30px;top:102.33px" width="11" height="11" viewBox="0 0 11 11"><circle cx="5.5" cy="5.5" r="4.55" fill="url(#cg)" stroke="#484848" stroke-width="1.4"/><path d="M3.1 4.9 L6.3 5.7" stroke="#5c5c5c" stroke-width="1.1" fill="none"/></svg>
<div class="t" style="left:59.9px;top:101.58px;letter-spacing:-0.246px">Physical Memory Available</div>
<div class="t v" style="left:191.2px;top:101.58px;width:61.3px">26,839 MB</div>
<div class="t v" style="left:257.9px;top:101.58px;width:61.3px">26,720 MB</div>
<div class="t v" style="left:324.6px;top:101.58px;width:61.3px">29,451 MB</div>
<div class="t v" style="left:391.3px;top:101.58px;width:61.3px">28,554 MB</div>
<div class="gl" style="left:25.1px;top:128.67px;width:488.7px"></div>
<svg class="i" style="left:46.30px;top:116.50px" width="11" height="11" viewBox="0 0 11 11"><circle cx="5.5" cy="5.5" r="4.55" fill="url(#cg)" stroke="#484848" stroke-width="1.4"/><path d="M3.1 4.9 L6.3 5.7" stroke="#5c5c5c" stroke-width="1.1" fill="none"/></svg>
<div class="t" style="left:59.9px;top:115.75px;letter-spacing:-0.278px">Physical Memory Load</div>
<div class="t v" style="left:191.2px;top:115.75px;width:61.3px">17.9 %</div>
<div class="t v" style="left:257.9px;top:115.75px;width:61.3px">9.9 %</div>
<div class="t v" style="left:324.6px;top:115.75px;width:61.3px">18.3 %</div>
<div class="t v" style="left:391.3px;top:115.75px;width:61.3px">12.7 %</div>
<div class="gl" style="left:25.1px;top:142.84px;width:488.7px"></div>
<div class="st" style="left:58.3px;top:129.17px;width:399.7px;height:13.57px"></div>
<svg class="i" style="left:46.30px;top:130.67px" width="11" height="11" viewBox="0 0 11 11"><circle cx="5.5" cy="5.5" r="4.55" fill="url(#cg)" stroke="#484848" stroke-width="1.4"/><path d="M3.1 4.9 L6.3 5.7" stroke="#5c5c5c" stroke-width="1.1" fill="none"/></svg>
<div class="t" style="left:59.9px;top:129.92px;letter-spacing:-0.318px">Page File Usage</div>
<div class="t v" style="left:191.2px;top:129.92px;width:61.3px">0.0 %</div>
<div class="t v" style="left:257.9px;top:129.92px;width:61.3px">0.0 %</div>
<div class="t v" style="left:324.6px;top:129.92px;width:61.3px">0.0 %</div>
<div class="t v" style="left:391.3px;top:129.92px;width:61.3px">0.0 %</div>
<div class="gl" style="left:25.1px;top:157.01px;width:488.7px"></div>
<div class="gl" style="left:25.1px;top:171.18px;width:488.7px"></div>
<div class="hd" style="left:58.8px;top:157.51px;width:399.2px;height:13.32px"></div>
<svg class="i" style="left:32.40px;top:161.91px" width="9" height="6" viewBox="0 0 9 6"><path d="M1.2 0.9 L4.4 4.3 L7.6 0.9" fill="none" stroke="#4e4e4e" stroke-width="1.15"/></svg>
<svg class="i" style="left:46.40px;top:158.01px" width="11" height="12" viewBox="0 0 10.4 11.4"><rect x="0" y="1.6" width="10.4" height="0.8" fill="#8a8a8a"/><rect x="0" y="3.4" width="10.4" height="0.8" fill="#8a8a8a"/><rect x="0" y="5.1" width="10.4" height="0.8" fill="#8a8a8a"/><rect x="0" y="6.8" width="10.4" height="0.8" fill="#8a8a8a"/><rect x="0" y="8.6" width="10.4" height="0.8" fill="#8a8a8a"/><rect x="1.6" y="0.3" width="7.1" height="10.8" rx="0.8" fill="#3c3c3c"/><rect x="4.3" y="0.6" width="1.4" height="10.2" fill="#555"/></svg>
<div class="t it" style="left:60.9px;top:158.26px">CPU [#0]: AMD Ryzen 9 5900X</div>
<div class="gl" style="left:25.1px;top:185.35px;width:488.7px"></div>
<svg class="i" style="left:45.00px;top:176.08px" width="9" height="6" viewBox="0 0 9 6"><path d="M1.2 0.9 L4.4 4.3 L7.6 0.9" fill="none" stroke="#4e4e4e" stroke-width="1.15"/></svg>
<svg class="i" style="left:61.20px;top:172.08px" width="8" height="13" viewBox="0 0 8 13"><path d="M2.2 0.7 Q4.6 0.1 6.8 1.2 L5.5 4.3 L6.8 4.5 L4.9 7.9 L5.7 8.1 L0.9 12.5 L2.1 8.6 L1.0 8.4 L2.4 5 L1.1 4.6 Z" fill="url(#bg)" stroke="#bd9658" stroke-width="0.95" stroke-linejoin="round"/></svg>
<div class="t" style="left:73.1px;top:172.43px;letter-spacing:-0.428px">Core VIDs</div>
<div class="t v" style="left:191.2px;top:172.43px;width:61.3px">1.188 V</div>
<div class="t v" style="left:257.9px;top:172.43px;width:61.3px">0.200 V</div>
<div class="t v" style="left:324.6px;top:172.43px;width:61.3px">1.488 V</div>
<div class="t v" style="left:391.3px;top:172.43px;width:61.3px">1.094 V</div>
<div class="gl" style="left:25.1px;top:199.52px;width:488.7px"></div>
<div class="st" style="left:71.5px;top:185.85px;width:386.5px;height:13.57px"></div>
<svg class="i" style="left:61.20px;top:186.25px" width="8" height="13" viewBox="0 0 8 13"><path d="M2.2 0.7 Q4.6 0.1 6.8 1.2 L5.5 4.3 L6.8 4.5 L4.9 7.9 L5.7 8.1 L0.9 12.5 L2.1 8.6 L1.0 8.4 L2.4 5 L1.1 4.6 Z" fill="url(#bg)" stroke="#bd9658" stroke-width="0.95" stroke-linejoin="round"/></svg>
<div class="t" style="left:73.1px;top:186.60px;letter-spacing:-0.418px">Core 0 VID</div>
<div class="t v" style="left:191.2px;top:186.60px;width:61.3px">1.194 V</div>
<div class="t v" style="left:257.9px;top:186.60px;width:61.3px">0.200 V</div>
<div class="t v" style="left:324.6px;top:186.60px;width:61.3px">1.475 V</div>
<div class="t v" style="left:391.3px;top:186.60px;width:61.3px">1.101 V</div>
<div class="gl" style="left:25.1px;top:213.69px;width:488.7px"></div>
<svg class="i" style="left:61.20px;top:200.42px" width="8" height="13" viewBox="0 0 8 13"><path d="M2.2 0.7 Q4.6 0.1 6.8 1.2 L5.5 4.3 L6.8 4.5 L4.9 7.9 L5.7 8.1 L0.9 12.5 L2.1 8.6 L1.0 8.4 L2.4 5 L1.1 4.6 Z" fill="url(#bg)" stroke="#bd9658" stroke-width="0.95" stroke-linejoin="round"/></svg>
<div class="t" style="left:73.1px;top:200.77px;letter-spacing:-0.418px">Core 1 VID</div>
<div class="t v" style="left:191.2px;top:200.77px;width:61.3px">1.188 V</div>
<div class="t v" style="left:257.9px;top:200.77px;width:61.3px">0.200 V</div>
<div class="t v" style="left:324.6px;top:200.77px;width:61.3px">1.475 V</div>
<div class="t v" style="left:391.3px;top:200.77px;width:61.3px">1.069 V</div>
<div class="gl" style="left:25.1px;top:227.86px;width:488.7px"></div>
<div class="st" style="left:71.5px;top:214.19px;width:386.5px;height:13.57px"></div>
<svg class="i" style="left:61.20px;top:214.59px" width="8" height="13" viewBox="0 0 8 13"><path d="M2.2 0.7 Q4.6 0.1 6.8 1.2 L5.5 4.3 L6.8 4.5 L4.9 7.9 L5.7 8.1 L0.9 12.5 L2.1 8.6 L1.0 8.4 L2.4 5 L1.1 4.6 Z" fill="url(#bg)" stroke="#bd9658" stroke-width="0.95" stroke-linejoin="round"/></svg>
<div class="t" style="left:73.1px;top:214.94px;letter-spacing:-0.418px">Core 2 VID</div>
<div class="t v" style="left:191.2px;top:214.94px;width:61.3px">1.188 V</div>
<div class="t v" style="left:257.9px;top:214.94px;width:61.3px">0.200 V</div>
<div class="t v" style="left:324.6px;top:214.94px;width:61.3px">1.475 V</div>
<div class="t v" style="left:391.3px;top:214.94px;width:61.3px">1.076 V</div>
<div class="gl" style="left:25.1px;top:242.03px;width:488.7px"></div>
<svg class="i" style="left:61.20px;top:228.76px" width="8" height="13" viewBox="0 0 8 13"><path d="M2.2 0.7 Q4.6 0.1 6.8 1.2 L5.5 4.3 L6.8 4.5 L4.9 7.9 L5.7 8.1 L0.9 12.5 L2.1 8.6 L1.0 8.4 L2.4 5 L1.1 4.6 Z" fill="url(#bg)" stroke="#bd9658" stroke-width="0.95" stroke-linejoin="round"/></svg>
<div class="t" style="left:73.1px;top:229.11px;letter-spacing:-0.418px">Core 3 VID</div>
<div class="t v" style="left:191.2px;top:229.11px;width:61.3px">1.188 V</div>
<div class="t v" style="left:257.9px;top:229.11px;width:61.3px">0.200 V</div>
<div class="t v" style="left:324.6px;top:229.11px;width:61.3px">1.475 V</div>
<div class="t v" style="left:391.3px;top:229.11px;width:61.3px">1.076 V</div>
<div class="gl" style="left:25.1px;top:256.20px;width:488.7px"></div>
<div class="st" style="left:71.5px;top:242.53px;width:386.5px;height:13.57px"></div>
<svg class="i" style="left:61.20px;top:242.93px" width="8" height="13" viewBox="0 0 8 13"><path d="M2.2 0.7 Q4.6 0.1 6.8 1.2 L5.5 4.3 L6.8 4.5 L4.9 7.9 L5.7 8.1 L0.9 12.5 L2.1 8.6 L1.0 8.4 L2.4 5 L1.1 4.6 Z" fill="url(#bg)" stroke="#bd9658" stroke-width="0.95" stroke-linejoin="round"/></svg>
<div class="t" style="left:73.1px;top:243.28px;letter-spacing:-0.418px">Core 4 VID</div>
<div class="t v" style="left:191.2px;top:243.28px;width:61.3px">1.188 V</div>
<div class="t v" style="left:257.9px;top:243.28px;width:61.3px">0.200 V</div>
<div class="t v" style="left:324.6px;top:243.28px;width:61.3px">1.475 V</div>
<div class="t v" style="left:391.3px;top:243.28px;width:61.3px">1.080 V</div>
<div class="gl" style="left:25.1px;top:270.37px;width:488.7px"></div>
<svg class="i" style="left:61.20px;top:257.10px" width="8" height="13" viewBox="0 0 8 13"><path d="M2.2 0.7 Q4.6 0.1 6.8 1.2 L5.5 4.3 L6.8 4.5 L4.9 7.9 L5.7 8.1 L0.9 12.5 L2.1 8.6 L1.0 8.4 L2.4 5 L1.1 4.6 Z" fill="url(#bg)" stroke="#bd9658" stroke-width="0.95" stroke-linejoin="round"/></svg>
<div class="t" style="left:73.1px;top:257.45px;letter-spacing:-0.418px">Core 5 VID</div>
<div class="t v" style="left:191.2px;top:257.45px;width:61.3px">1.188 V</div>
<div class="t v" style="left:257.9px;top:257.45px;width:61.3px">0.200 V</div>
<div class="t v" style="left:324.6px;top:257.45px;width:61.3px">1.475 V</div>
<div class="t v" style="left:391.3px;top:257.45px;width:61.3px">1.080 V</div>
<div class="gl" style="left:25.1px;top:284.54px;width:488.7px"></div>
<div class="st" style="left:71.5px;top:270.87px;width:386.5px;height:13.57px"></div>
<svg class="i" style="left:61.20px;top:271.27px" width="8" height="13" viewBox="0 0 8 13"><path d="M2.2 0.7 Q4.6 0.1 6.8 1.2 L5.5 4.3 L6.8 4.5 L4.9 7.9 L5.7 8.1 L0.9 12.5 L2.1 8.6 L1.0 8.4 L2.4 5 L1.1 4.6 Z" fill="url(#bg)" stroke="#bd9658" stroke-width="0.95" stroke-linejoin="round"/></svg>
<div class="t" style="left:73.1px;top:271.62px;letter-spacing:-0.418px">Core 6 VID</div>
<div class="t v" style="left:191.2px;top:271.62px;width:61.3px">1.188 V</div>
<div class="t v" style="left:257.9px;top:271.62px;width:61.3px">0.200 V</div>
<div class="t v" style="left:324.6px;top:271.62px;width:61.3px">1.488 V</div>
<div class="t v" style="left:391.3px;top:271.62px;width:61.3px">1.084 V</div>
<div class="gl" style="left:25.1px;top:298.71px;width:488.7px"></div>
<svg class="i" style="left:61.20px;top:285.44px" width="8" height="13" viewBox="0 0 8 13"><path d="M2.2 0.7 Q4.6 0.1 6.8 1.2 L5.5 4.3 L6.8 4.5 L4.9 7.9 L5.7 8.1 L0.9 12.5 L2.1 8.6 L1.0 8.4 L2.4 5 L1.1 4.6 Z" fill="url(#bg)" stroke="#bd9658" stroke-width="0.95" stroke-linejoin="round"/></svg>
<div class="t" style="left:73.1px;top:285.79px;letter-spacing:-0.418px">Core 7 VID</div>
<div class="t v" style="left:191.2px;top:285.79px;width:61.3px">1.188 V</div>
<div class="t v" style="left:257.9px;top:285.79px;width:61.3px">0.200 V</div>
<div class="t v" style="left:324.6px;top:285.79px;width:61.3px">1.488 V</div>
<div class="t v" style="left:391.3px;top:285.79px;width:61.3px">1.070 V</div>
<div class="gl" style="left:25.1px;top:312.88px;width:488.7px"></div>
<div class="st" style="left:71.5px;top:299.21px;width:386.5px;height:13.57px"></div>
<svg class="i" style="left:61.20px;top:299.61px" width="8" height="13" viewBox="0 0 8 13"><path d="M2.2 0.7 Q4.6 0.1 6.8 1.2 L5.5 4.3 L6.8 4.5 L4.9 7.9 L5.7 8.1 L0.9 12.5 L2.1 8.6 L1.0 8.4 L2.4 5 L1.1 4.6 Z" fill="url(#bg)" stroke="#bd9658" stroke-width="0.95" stroke-linejoin="round"/></svg>
<div class="t" style="left:73.1px;top:299.96px;letter-spacing:-0.418px">Core 8 VID</div>
<div class="t v" style="left:191.2px;top:299.96px;width:61.3px">1.188 V</div>
<div class="t v" style="left:257.9px;top:299.96px;width:61.3px">0.200 V</div>
<div class="t v" style="left:324.6px;top:299.96px;width:61.3px">1.488 V</div>
<div class="t v" style="left:391.3px;top:299.96px;width:61.3px">1.093 V</div>
<div class="gl" style="left:25.1px;top:327.05px;width:488.7px"></div>
<svg class="i" style="left:61.20px;top:313.78px" width="8" height="13" viewBox="0 0 8 13"><path d="M2.2 0.7 Q4.6 0.1 6.8 1.2 L5.5 4.3 L6.8 4.5 L4.9 7.9 L5.7 8.1 L0.9 12.5 L2.1 8.6 L1.0 8.4 L2.4 5 L1.1 4.6 Z" fill="url(#bg)" stroke="#bd9658" stroke-width="0.95" stroke-linejoin="round"/></svg>
<div class="t" style="left:73.1px;top:314.13px;letter-spacing:-0.418px">Core 9 VID</div>
<div class="t v" style="left:191.2px;top:314.13px;width:61.3px">1.188 V</div>
<div class="t v" style="left:257.9px;top:314.13px;width:61.3px">0.919 V</div>
<div class="t v" style="left:324.6px;top:314.13px;width:61.3px">1.488 V</div>
<div class="t v" style="left:391.3px;top:314.13px;width:61.3px">1.119 V</div>
<div class="gl" style="left:25.1px;top:341.22px;width:488.7px"></div>
<div class="st" style="left:71.5px;top:327.55px;width:386.5px;height:13.57px"></div>
<svg class="i" style="left:61.20px;top:327.95px" width="8" height="13" viewBox="0 0 8 13"><path d="M2.2 0.7 Q4.6 0.1 6.8 1.2 L5.5 4.3 L6.8 4.5 L4.9 7.9 L5.7 8.1 L0.9 12.5 L2.1 8.6 L1.0 8.4 L2.4 5 L1.1 4.6 Z" fill="url(#bg)" stroke="#bd9658" stroke-width="0.95" stroke-linejoin="round"/></svg>
<div class="t" style="left:73.1px;top:328.30px;letter-spacing:-0.370px">Core 10 VID</div>
<div class="t v" style="left:191.2px;top:328.30px;width:61.3px">1.188 V</div>
<div class="t v" style="left:257.9px;top:328.30px;width:61.3px">0.919 V</div>
<div class="t v" style="left:324.6px;top:328.30px;width:61.3px">1.488 V</div>
<div class="t v" style="left:391.3px;top:328.30px;width:61.3px">1.135 V</div>
<div class="gl" style="left:25.1px;top:355.39px;width:488.7px"></div>
<svg class="i" style="left:61.20px;top:342.12px" width="8" height="13" viewBox="0 0 8 13"><path d="M2.2 0.7 Q4.6 0.1 6.8 1.2 L5.5 4.3 L6.8 4.5 L4.9 7.9 L5.7 8.1 L0.9 12.5 L2.1 8.6 L1.0 8.4 L2.4 5 L1.1 4.6 Z" fill="url(#bg)" stroke="#bd9658" stroke-width="0.95" stroke-linejoin="round"/></svg>
<div class="t" style="left:73.1px;top:342.47px;letter-spacing:-0.370px">Core 11 VID</div>
<div class="t v" style="left:191.2px;top:342.47px;width:61.3px">1.188 V</div>
<div class="t v" style="left:257.9px;top:342.47px;width:61.3px">0.919 V</div>
<div class="t v" style="left:324.6px;top:342.47px;width:61.3px">1.488 V</div>
<div class="t v" style="left:391.3px;top:342.47px;width:61.3px">1.148 V</div>
<div class="gl" style="left:25.1px;top:369.56px;width:488.7px"></div>
<div class="st" style="left:71.5px;top:355.89px;width:386.5px;height:13.57px"></div>
<svg class="i" style="left:45.00px;top:360.29px" width="9" height="6" viewBox="0 0 9 6"><path d="M1.2 0.9 L4.4 4.3 L7.6 0.9" fill="none" stroke="#4e4e4e" stroke-width="1.15"/></svg>
<svg class="i" style="left:59.70px;top:357.39px" width="11" height="11" viewBox="0 0 11 11"><circle cx="5.5" cy="5.5" r="4.55" fill="url(#cg)" stroke="#484848" stroke-width="1.4"/><path d="M3.1 4.9 L6.3 5.7" stroke="#5c5c5c" stroke-width="1.1" fill="none"/></svg>
<div class="t" style="left:73.1px;top:356.64px;letter-spacing:-0.296px">Core Clocks</div>
<div class="t v" style="left:191.2px;top:356.64px;width:61.3px">4,439.8 MHz</div>
<div class="t v" style="left:257.9px;top:356.64px;width:61.3px">2,934.6 MHz</div>
<div class="t v" style="left:324.6px;top:356.64px;width:61.3px">5,040.8 MHz</div>
<div class="t v" style="left:391.3px;top:356.64px;width:61.3px">3,920.2 MHz</div>
<div class="gl" style="left:25.1px;top:383.73px;width:488.7px"></div>
<svg class="i" style="left:59.70px;top:371.56px" width="11" height="11" viewBox="0 0 11 11"><circle cx="5.5" cy="5.5" r="4.55" fill="url(#cg)" stroke="#484848" stroke-width="1.4"/><path d="M3.1 4.9 L6.3 5.7" stroke="#5c5c5c" stroke-width="1.1" fill="none"/></svg>
<div class="t" style="left:73.1px;top:370.81px;letter-spacing:-0.062px">Core 0 Clock (perf #1/1)</div>
<div class="t v" style="left:191.2px;top:370.81px;width:61.3px">4,416.9 MHz</div>
<div class="t v" style="left:257.9px;top:370.81px;width:61.3px">3,668.3 MHz</div>
<div class="t v" style="left:324.6px;top:370.81px;width:61.3px">4,516.8 MHz</div>
<div class="t v" style="left:391.3px;top:370.81px;width:61.3px">3,835.4 MHz</div>
<div class="gl" style="left:25.1px;top:397.90px;width:488.7px"></div>
<div class="st" style="left:71.5px;top:384.23px;width:386.5px;height:13.57px"></div>
<svg class="i" style="left:59.70px;top:385.73px" width="11" height="11" viewBox="0 0 11 11"><circle cx="5.5" cy="5.5" r="4.55" fill="url(#cg)" stroke="#484848" stroke-width="1.4"/><path d="M3.1 4.9 L6.3 5.7" stroke="#5c5c5c" stroke-width="1.1" fill="none"/></svg>
<div class="t" style="left:73.1px;top:384.98px;letter-spacing:-0.062px">Core 1 Clock (perf #2/3)</div>
<div class="t v" style="left:191.2px;top:384.98px;width:61.3px">4,441.9 MHz</div>
<div class="t v" style="left:257.9px;top:384.98px;width:61.3px">3,668.3 MHz</div>
<div class="t v" style="left:324.6px;top:384.98px;width:61.3px">4,491.8 MHz</div>
<div class="t v" style="left:391.3px;top:384.98px;width:61.3px">3,873.5 MHz</div>
<div class="gl" style="left:25.1px;top:412.07px;width:488.7px"></div>
<svg class="i" style="left:59.70px;top:399.90px" width="11" height="11" viewBox="0 0 11 11"><circle cx="5.5" cy="5.5" r="4.55" fill="url(#cg)" stroke="#484848" stroke-width="1.4"/><path d="M3.1 4.9 L6.3 5.7" stroke="#5c5c5c" stroke-width="1.1" fill="none"/></svg>
<div class="t" style="left:73.1px;top:399.15px;letter-spacing:-0.062px">Core 2 Clock (perf #4/5)</div>
<div class="t v" style="left:191.2px;top:399.15px;width:61.3px">4,441.9 MHz</div>
<div class="t v" style="left:257.9px;top:399.15px;width:61.3px">3,668.3 MHz</div>
<div class="t v" style="left:324.6px;top:399.15px;width:61.3px">5,015.8 MHz</div>
<div class="t v" style="left:391.3px;top:399.15px;width:61.3px">3,923.9 MHz</div>
<div class="gl" style="left:25.1px;top:426.24px;width:488.7px"></div>
<div class="st" style="left:71.5px;top:412.57px;width:386.5px;height:13.57px"></div>
<svg class="i" style="left:59.70px;top:414.07px" width="11" height="11" viewBox="0 0 11 11"><circle cx="5.5" cy="5.5" r="4.55" fill="url(#cg)" stroke="#484848" stroke-width="1.4"/><path d="M3.1 4.9 L6.3 5.7" stroke="#5c5c5c" stroke-width="1.1" fill="none"/></svg>
<div class="t" style="left:73.1px;top:413.32px;letter-spacing:-0.062px">Core 3 Clock (perf #5/6)</div>
<div class="t v" style="left:191.2px;top:413.32px;width:61.3px">4,441.9 MHz</div>
<div class="t v" style="left:257.9px;top:413.32px;width:61.3px">2,934.6 MHz</div>
<div class="t v" style="left:324.6px;top:413.32px;width:61.3px">4,791.3 MHz</div>
<div class="t v" style="left:391.3px;top:413.32px;width:61.3px">3,901.0 MHz</div>
<div class="gl" style="left:25.1px;top:440.41px;width:488.7px"></div>
<svg class="i" style="left:59.70px;top:428.24px" width="11" height="11" viewBox="0 0 11 11"><circle cx="5.5" cy="5.5" r="4.55" fill="url(#cg)" stroke="#484848" stroke-width="1.4"/><path d="M3.1 4.9 L6.3 5.7" stroke="#5c5c5c" stroke-width="1.1" fill="none"/></svg>
<div class="t" style="left:73.1px;top:427.49px;letter-spacing:-0.062px">Core 4 Clock (perf #1/2)</div>
<div class="t v" style="left:191.2px;top:427.49px;width:61.3px">4,441.9 MHz</div>
<div class="t v" style="left:257.9px;top:427.49px;width:61.3px">3,668.3 MHz</div>
<div class="t v" style="left:324.6px;top:427.49px;width:61.3px">5,040.8 MHz</div>
<div class="t v" style="left:391.3px;top:427.49px;width:61.3px">3,966.9 MHz</div>
<div class="gl" style="left:25.1px;top:454.58px;width:488.7px"></div>
<div class="st" style="left:71.5px;top:440.91px;width:386.5px;height:13.57px"></div>
<svg class="i" style="left:59.70px;top:442.41px" width="11" height="11" viewBox="0 0 11 11"><circle cx="5.5" cy="5.5" r="4.55" fill="url(#cg)" stroke="#484848" stroke-width="1.4"/><path d="M3.1 4.9 L6.3 5.7" stroke="#5c5c5c" stroke-width="1.1" fill="none"/></svg>
<div class="t" style="left:73.1px;top:441.66px;letter-spacing:-0.062px">Core 5 Clock (perf #3/4)</div>
<div class="t v" style="left:191.2px;top:441.66px;width:61.3px">4,441.9 MHz</div>
<div class="t v" style="left:257.9px;top:441.66px;width:61.3px">3,668.3 MHz</div>
<div class="t v" style="left:324.6px;top:441.66px;width:61.3px">4,491.8 MHz</div>
<div class="t v" style="left:391.3px;top:441.66px;width:61.3px">3,916.2 MHz</div>
<div class="gl" style="left:25.1px;top:468.75px;width:488.7px"></div>
<svg class="i" style="left:59.70px;top:456.58px" width="11" height="11" viewBox="0 0 11 11"><circle cx="5.5" cy="5.5" r="4.55" fill="url(#cg)" stroke="#484848" stroke-width="1.4"/><path d="M3.1 4.9 L6.3 5.7" stroke="#5c5c5c" stroke-width="1.1" fill="none"/></svg>
<div class="t" style="left:73.1px;top:455.83px;letter-spacing:-0.049px">Core 6 Clock (perf #11/12)</div>
<div class="t v" style="left:191.2px;top:455.83px;width:61.3px">4,441.9 MHz</div>
<div class="t v" style="left:257.9px;top:455.83px;width:61.3px">3,668.3 MHz</div>
<div class="t v" style="left:324.6px;top:455.83px;width:61.3px">4,841.2 MHz</div>
<div class="t v" style="left:391.3px;top:455.83px;width:61.3px">4,137.9 MHz</div>
<div class="gl" style="left:25.1px;top:482.92px;width:488.7px"></div>
<div class="st" style="left:71.5px;top:469.25px;width:386.5px;height:13.57px"></div>
<svg class="i" style="left:59.70px;top:470.75px" width="11" height="11" viewBox="0 0 11 11"><circle cx="5.5" cy="5.5" r="4.55" fill="url(#cg)" stroke="#484848" stroke-width="1.4"/><path d="M3.1 4.9 L6.3 5.7" stroke="#5c5c5c" stroke-width="1.1" fill="none"/></svg>
<div class="t" style="left:73.1px;top:470.00px;letter-spacing:-0.062px">Core 7 Clock (perf #7/9)</div>
<div class="t v" style="left:191.2px;top:470.00px;width:61.3px">4,441.9 MHz</div>
<div class="t v" style="left:257.9px;top:470.00px;width:61.3px">3,668.3 MHz</div>
<div class="t v" style="left:324.6px;top:470.00px;width:61.3px">4,791.3 MHz</div>
<div class="t v" style="left:391.3px;top:470.00px;width:61.3px">3,912.1 MHz</div>
<div class="gl" style="left:25.1px;top:497.09px;width:488.7px"></div>
<svg class="i" style="left:59.70px;top:484.92px" width="11" height="11" viewBox="0 0 11 11"><circle cx="5.5" cy="5.5" r="4.55" fill="url(#cg)" stroke="#484848" stroke-width="1.4"/><path d="M3.1 4.9 L6.3 5.7" stroke="#5c5c5c" stroke-width="1.1" fill="none"/></svg>
<div class="t" style="left:73.1px;top:484.17px;letter-spacing:-0.049px">Core 8 Clock (perf #10/11)</div>
<div class="t v" style="left:191.2px;top:484.17px;width:61.3px">4,441.9 MHz</div>
<div class="t v" style="left:257.9px;top:484.17px;width:61.3px">3,668.3 MHz</div>
<div class="t v" style="left:324.6px;top:484.17px;width:61.3px">4,841.2 MHz</div>
<div class="t v" style="left:391.3px;top:484.17px;width:61.3px">3,912.4 MHz</div>
<div class="gl" style="left:25.1px;top:511.26px;width:488.7px"></div>
<div class="st" style="left:71.5px;top:497.59px;width:386.5px;height:13.57px"></div>
<svg class="i" style="left:59.70px;top:499.09px" width="11" height="11" viewBox="0 0 11 11"><circle cx="5.5" cy="5.5" r="4.55" fill="url(#cg)" stroke="#484848" stroke-width="1.4"/><path d="M3.1 4.9 L6.3 5.7" stroke="#5c5c5c" stroke-width="1.1" fill="none"/></svg>
<div class="t" style="left:73.1px;top:498.34px;letter-spacing:-0.062px">Core 9 Clock (perf #8/8)</div>
<div class="t v" style="left:191.2px;top:498.34px;width:61.3px">4,441.9 MHz</div>
<div class="t v" style="left:257.9px;top:498.34px;width:61.3px">3,668.3 MHz</div>
<div class="t v" style="left:324.6px;top:498.34px;width:61.3px">4,491.8 MHz</div>
<div class="t v" style="left:391.3px;top:498.34px;width:61.3px">3,883.9 MHz</div>
<div class="gl" style="left:25.1px;top:525.43px;width:488.7px"></div>
<svg class="i" style="left:59.70px;top:513.26px" width="11" height="11" viewBox="0 0 11 11"><circle cx="5.5" cy="5.5" r="4.55" fill="url(#cg)" stroke="#484848" stroke-width="1.4"/><path d="M3.1 4.9 L6.3 5.7" stroke="#5c5c5c" stroke-width="1.1" fill="none"/></svg>
<div class="t" style="left:73.1px;top:512.51px;letter-spacing:-0.049px">Core 10 Clock (perf #9/10)</div>
<div class="t v" style="left:191.2px;top:512.51px;width:61.3px">4,441.9 MHz</div>
<div class="t v" style="left:257.9px;top:512.51px;width:61.3px">3,668.3 MHz</div>
<div class="t v" style="left:324.6px;top:512.51px;width:61.3px">4,491.8 MHz</div>
<div class="t v" style="left:391.3px;top:512.51px;width:61.3px">3,883.9 MHz</div>
<div class="gl" style="left:25.1px;top:539.60px;width:488.7px"></div>
<div class="st" style="left:71.5px;top:525.93px;width:386.5px;height:13.57px"></div>
<svg class="i" style="left:59.70px;top:527.43px" width="11" height="11" viewBox="0 0 11 11"><circle cx="5.5" cy="5.5" r="4.55" fill="url(#cg)" stroke="#484848" stroke-width="1.4"/><path d="M3.1 4.9 L6.3 5.7" stroke="#5c5c5c" stroke-width="1.1" fill="none"/></svg>
<div class="t" style="left:73.1px;top:526.68px;letter-spacing:-0.055px">Core 11 Clock (perf #6/7)</div>
<div class="t v" style="left:191.2px;top:526.68px;width:61.3px">4,441.9 MHz</div>
<div class="t v" style="left:257.9px;top:526.68px;width:61.3px">2,934.6 MHz</div>
<div class="t v" style="left:324.6px;top:526.68px;width:61.3px">4,816.2 MHz</div>
<div class="t v" style="left:391.3px;top:526.68px;width:61.3px">3,895.4 MHz</div>
<div class="gl" style="left:25.1px;top:553.77px;width:488.7px"></div>
<svg class="i" style="left:46.30px;top:541.60px" width="11" height="11" viewBox="0 0 11 11"><circle cx="5.5" cy="5.5" r="4.55" fill="url(#cg)" stroke="#484848" stroke-width="1.4"/><path d="M3.1 4.9 L6.3 5.7" stroke="#5c5c5c" stroke-width="1.1" fill="none"/></svg>
<div class="t" style="left:59.9px;top:540.85px;letter-spacing:-0.327px">Bus Clock</div>
<div class="t v" style="left:191.2px;top:540.85px;width:61.3px">99.8 MHz</div>
<div class="t v" style="left:257.9px;top:540.85px;width:61.3px">99.8 MHz</div>
<div class="t v" style="left:324.6px;top:540.85px;width:61.3px">99.8 MHz</div>
<div class="t v" style="left:391.3px;top:540.85px;width:61.3px">99.8 MHz</div>
<div class="gl" style="left:25.1px;top:567.94px;width:488.7px"></div>
<div class="st" style="left:71.5px;top:554.27px;width:386.5px;height:13.57px"></div>
<svg class="i" style="left:47.40px;top:556.87px" width="6" height="9" viewBox="0 0 6 9"><path d="M0.9 1.2 L4.2 4.4 L0.9 7.6" fill="none" stroke="#4e4e4e" stroke-width="1.15"/></svg>
<svg class="i" style="left:59.70px;top:555.77px" width="11" height="11" viewBox="0 0 11 11"><circle cx="5.5" cy="5.5" r="4.55" fill="url(#cg)" stroke="#484848" stroke-width="1.4"/><path d="M3.1 4.9 L6.3 5.7" stroke="#5c5c5c" stroke-width="1.1" fill="none"/></svg>
<div class="t" style="left:73.1px;top:555.02px;letter-spacing:-0.260px">Core Effective Clocks</div>
<div class="t v" style="left:191.2px;top:555.02px;width:61.3px">4,243.9 MHz</div>
<div class="t v" style="left:257.9px;top:555.02px;width:61.3px">0.6 MHz</div>
<div class="t v" style="left:324.6px;top:555.02px;width:61.3px">4,435.5 MHz</div>
<div class="t v" style="left:391.3px;top:555.02px;width:61.3px">953.5 MHz</div>
<div class="gl" style="left:25.1px;top:582.11px;width:488.7px"></div>
<div class="st" style="left:58.3px;top:568.44px;width:399.7px;height:13.57px"></div>
<svg class="i" style="left:46.30px;top:569.94px" width="11" height="11" viewBox="0 0 11 11"><circle cx="5.5" cy="5.5" r="4.55" fill="url(#cg)" stroke="#484848" stroke-width="1.4"/><path d="M3.1 4.9 L6.3 5.7" stroke="#5c5c5c" stroke-width="1.1" fill="none"/></svg>
<div class="t" style="left:59.9px;top:569.19px;letter-spacing:-0.248px">Average Effective Clock</div>
<div class="t v" style="left:191.2px;top:569.19px;width:61.3px">4,427.5 MHz</div>
<div class="t v" style="left:257.9px;top:569.19px;width:61.3px">17.6 MHz</div>
<div class="t v" style="left:324.6px;top:569.19px;width:61.3px">4,427.5 MHz</div>
<div class="t v" style="left:391.3px;top:569.19px;width:61.3px">1,006.0 MHz</div>
<div class="gl" style="left:25.1px;top:596.28px;width:488.7px"></div>
<svg class="i" style="left:47.40px;top:585.21px" width="6" height="9" viewBox="0 0 6 9"><path d="M0.9 1.2 L4.2 4.4 L0.9 7.6" fill="none" stroke="#4e4e4e" stroke-width="1.15"/></svg>
<svg class="i" style="left:59.70px;top:584.11px" width="11" height="11" viewBox="0 0 11 11"><circle cx="5.5" cy="5.5" r="4.55" fill="url(#cg)" stroke="#484848" stroke-width="1.4"/><path d="M3.1 4.9 L6.3 5.7" stroke="#5c5c5c" stroke-width="1.1" fill="none"/></svg>
<div class="t" style="left:73.1px;top:583.36px;letter-spacing:-0.305px">Core Usages</div>
<div class="t v" style="left:191.2px;top:583.36px;width:61.3px">100.0 %</div>
<div class="t v" style="left:257.9px;top:583.36px;width:61.3px">0.0 %</div>
<div class="t v" style="left:324.6px;top:583.36px;width:61.3px">100.0 %</div>
<div class="t v" style="left:391.3px;top:583.36px;width:61.3px">22.2 %</div>
<div class="gl" style="left:25.1px;top:610.45px;width:488.7px"></div>
<div class="st" style="left:58.3px;top:596.78px;width:399.7px;height:13.57px"></div>
<svg class="i" style="left:46.30px;top:598.28px" width="11" height="11" viewBox="0 0 11 11"><circle cx="5.5" cy="5.5" r="4.55" fill="url(#cg)" stroke="#484848" stroke-width="1.4"/><path d="M3.1 4.9 L6.3 5.7" stroke="#5c5c5c" stroke-width="1.1" fill="none"/></svg>
<div class="t" style="left:59.9px;top:597.53px;letter-spacing:-0.350px">Max CPU/Thread Usage</div>
<div class="t v" style="left:191.2px;top:597.53px;width:61.3px">100.0 %</div>
<div class="t v" style="left:257.9px;top:597.53px;width:61.3px">1.4 %</div>
<div class="t v" style="left:324.6px;top:597.53px;width:61.3px">100.0 %</div>
<div class="t v" style="left:391.3px;top:597.53px;width:61.3px">36.6 %</div>
<div class="gl" style="left:25.1px;top:624.62px;width:488.7px"></div>
<svg class="i" style="left:46.30px;top:612.45px" width="11" height="11" viewBox="0 0 11 11"><circle cx="5.5" cy="5.5" r="4.55" fill="url(#cg)" stroke="#484848" stroke-width="1.4"/><path d="M3.1 4.9 L6.3 5.7" stroke="#5c5c5c" stroke-width="1.1" fill="none"/></svg>
<div class="t" style="left:59.9px;top:611.70px;letter-spacing:-0.410px">Total CPU Usage</div>
<div class="t v" style="left:191.2px;top:611.70px;width:61.3px">100.0 %</div>
<div class="t v" style="left:257.9px;top:611.70px;width:61.3px">0.3 %</div>
<div class="t v" style="left:324.6px;top:611.70px;width:61.3px">100.0 %</div>
<div class="t v" style="left:391.3px;top:611.70px;width:61.3px">22.2 %</div>
<div class="gl" style="left:25.1px;top:638.79px;width:488.7px"></div>
<div class="st" style="left:71.5px;top:625.12px;width:386.5px;height:13.57px"></div>
<svg class="i" style="left:47.40px;top:627.72px" width="6" height="9" viewBox="0 0 6 9"><path d="M0.9 1.2 L4.2 4.4 L0.9 7.6" fill="none" stroke="#4e4e4e" stroke-width="1.15"/></svg>
<svg class="i" style="left:59.70px;top:626.62px" width="11" height="11" viewBox="0 0 11 11"><circle cx="5.5" cy="5.5" r="4.55" fill="url(#cg)" stroke="#484848" stroke-width="1.4"/><path d="M3.1 4.9 L6.3 5.7" stroke="#5c5c5c" stroke-width="1.1" fill="none"/></svg>
<div class="t" style="left:73.1px;top:625.87px;letter-spacing:-0.292px">Core Ratios</div>
<div class="t v" style="left:191.2px;top:625.87px;width:61.3px">44.5 x</div>
<div class="t v" style="left:257.9px;top:625.87px;width:61.3px">29.4 x</div>
<div class="t v" style="left:324.6px;top:625.87px;width:61.3px">50.5 x</div>
<div class="t v" style="left:391.3px;top:625.87px;width:61.3px">39.3 x</div>
<div class="cs" style="left:190.7px;top:44px;height:606.3px"></div>
<div class="cs" style="left:257.4px;top:44px;height:606.3px"></div>
<div class="cs" style="left:324.1px;top:44px;height:606.3px"></div>
<div class="cs" style="left:390.8px;top:44px;height:606.3px"></div>
<div class="cs" style="left:457.5px;top:44px;height:606.3px"></div>
<!-- right list -->
<div class="t hdr" style="left:535.1px;top:26.6px">Sensor</div>
<div class="t hdr v" style="left:713.8px;top:26.6px;width:61.4px">Current</div>
<div class="t hdr v" style="left:780.6px;top:26.6px;width:61.4px">Minimum</div>
<div class="t hdr v" style="left:847.4px;top:26.6px;width:61.4px">Maximum</div>
<div class="t hdr v" style="left:914.2px;top:26.6px;width:61.4px">Average</div>
<div class="hs" style="left:713.3px;top:25.0px;height:19.0px"></div>
<div class="hs" style="left:780.1px;top:25.0px;height:19.0px"></div>
<div class="hs" style="left:846.9px;top:25.0px;height:19.0px"></div>
<div class="hs" style="left:913.7px;top:25.0px;height:19.0px"></div>
<div class="hs" style="left:980.5px;top:25.0px;height:19.0px"></div>
<div class="gl" style="left:530.1px;top:57.07px;width:489.4px"></div>
<div class="st" style="left:562.3px;top:43.40px;width:418.7px;height:13.57px"></div>
<svg class="i" style="left:550.80px;top:43.10px" width="8" height="14" viewBox="0 0 8 14"><path d="M1.6 3.0 a2.4 2.4 0 0 1 4.8 0 V8.6 a2.85 2.85 0 1 1 -4.8 0 Z" fill="url(#tg)" stroke="#97a3ad" stroke-width="0.9"/><path d="M3.2 6.4 h1.6 v2.6 a1.8 1.8 0 1 1 -1.6 0 Z" fill="#cc8444" opacity=".9"/></svg>
<div class="t" style="left:563.9px;top:44.15px;letter-spacing:-0.365px">CPU CCD1 (Tdie)</div>
<div class="t v" style="left:713.8px;top:44.15px;width:61.4px">67.5 °C</div>
<div class="t v" style="left:780.6px;top:44.15px;width:61.4px">32.0 °C</div>
<div class="t v" style="left:847.4px;top:44.15px;width:61.4px">67.8 °C</div>
<div class="t v" style="left:914.2px;top:44.15px;width:61.4px">42.7 °C</div>
<div class="gl" style="left:530.1px;top:71.24px;width:489.4px"></div>
<svg class="i" style="left:550.80px;top:57.27px" width="8" height="14" viewBox="0 0 8 14"><path d="M1.6 3.0 a2.4 2.4 0 0 1 4.8 0 V8.6 a2.85 2.85 0 1 1 -4.8 0 Z" fill="url(#tg)" stroke="#97a3ad" stroke-width="0.9"/><path d="M3.2 6.4 h1.6 v2.6 a1.8 1.8 0 1 1 -1.6 0 Z" fill="#cc8444" opacity=".9"/></svg>
<div class="t" style="left:563.9px;top:58.32px;letter-spacing:-0.365px">CPU CCD2 (Tdie)</div>
<div class="t v" style="left:713.8px;top:58.32px;width:61.4px">65.0 °C</div>
<div class="t v" style="left:780.6px;top:58.32px;width:61.4px">32.5 °C</div>
<div class="t v" style="left:847.4px;top:58.32px;width:61.4px">65.5 °C</div>
<div class="t v" style="left:914.2px;top:58.32px;width:61.4px">42.9 °C</div>
<div class="gl" style="left:530.1px;top:85.41px;width:489.4px"></div>
<div class="st" style="left:562.3px;top:71.74px;width:418.7px;height:13.57px"></div>
<svg class="i" style="left:551.80px;top:72.14px" width="8" height="13" viewBox="0 0 8 13"><path d="M2.2 0.7 Q4.6 0.1 6.8 1.2 L5.5 4.3 L6.8 4.5 L4.9 7.9 L5.7 8.1 L0.9 12.5 L2.1 8.6 L1.0 8.4 L2.4 5 L1.1 4.6 Z" fill="url(#bg)" stroke="#bd9658" stroke-width="0.95" stroke-linejoin="round"/></svg>
<div class="t" style="left:563.9px;top:72.49px;letter-spacing:-0.366px">CPU Core Voltage (SVI2 TFN)</div>
<div class="t v" style="left:713.8px;top:72.49px;width:61.4px">1.200 V</div>
<div class="t v" style="left:780.6px;top:72.49px;width:61.4px">1.194 V</div>
<div class="t v" style="left:847.4px;top:72.49px;width:61.4px">1.487 V</div>
<div class="t v" style="left:914.2px;top:72.49px;width:61.4px">1.409 V</div>
<div class="gl" style="left:530.1px;top:99.58px;width:489.4px"></div>
<svg class="i" style="left:551.80px;top:86.31px" width="8" height="13" viewBox="0 0 8 13"><path d="M2.2 0.7 Q4.6 0.1 6.8 1.2 L5.5 4.3 L6.8 4.5 L4.9 7.9 L5.7 8.1 L0.9 12.5 L2.1 8.6 L1.0 8.4 L2.4 5 L1.1 4.6 Z" fill="url(#bg)" stroke="#bd9658" stroke-width="0.95" stroke-linejoin="round"/></svg>
<div class="t" style="left:563.9px;top:86.66px;letter-spacing:-0.337px">SoC Voltage (SVI2 TFN)</div>
<div class="t v" style="left:713.8px;top:86.66px;width:61.4px">0.981 V</div>
<div class="t v" style="left:780.6px;top:86.66px;width:61.4px">0.975 V</div>
<div class="t v" style="left:847.4px;top:86.66px;width:61.4px">0.981 V</div>
<div class="t v" style="left:914.2px;top:86.66px;width:61.4px">0.981 V</div>
<div class="gl" style="left:530.1px;top:113.75px;width:489.4px"></div>
<div class="st" style="left:562.3px;top:100.08px;width:418.7px;height:13.57px"></div>
<svg class="i" style="left:551.80px;top:100.48px" width="8" height="13" viewBox="0 0 8 13"><path d="M2.2 0.7 Q4.6 0.1 6.8 1.2 L5.5 4.3 L6.8 4.5 L4.9 7.9 L5.7 8.1 L0.9 12.5 L2.1 8.6 L1.0 8.4 L2.4 5 L1.1 4.6 Z" fill="url(#bg)" stroke="#bd9658" stroke-width="0.95" stroke-linejoin="round"/></svg>
<div class="t" style="left:563.9px;top:100.83px;letter-spacing:-0.307px">CPU Core VID (Effective)</div>
<div class="t v" style="left:713.8px;top:100.83px;width:61.4px">1.275 V</div>
<div class="t v" style="left:780.6px;top:100.83px;width:61.4px">1.275 V</div>
<div class="t v" style="left:847.4px;top:100.83px;width:61.4px">1.500 V</div>
<div class="t v" style="left:914.2px;top:100.83px;width:61.4px">1.435 V</div>
<div class="gl" style="left:530.1px;top:127.92px;width:489.4px"></div>
<svg class="i" style="left:551.80px;top:114.65px" width="8" height="13" viewBox="0 0 8 13"><path d="M2.2 0.7 Q4.6 0.1 6.8 1.2 L5.5 4.3 L6.8 4.5 L4.9 7.9 L5.7 8.1 L0.9 12.5 L2.1 8.6 L1.0 8.4 L2.4 5 L1.1 4.6 Z" fill="url(#bg)" stroke="#bd9658" stroke-width="0.95" stroke-linejoin="round"/></svg>
<div class="t" style="left:563.9px;top:115.00px;letter-spacing:-0.368px">CPU Core Current (SVI2 TFN)</div>
<div class="t v" style="left:713.8px;top:115.00px;width:61.4px">95.005 A</div>
<div class="t v" style="left:780.6px;top:115.00px;width:61.4px">5.440 A</div>
<div class="t v" style="left:847.4px;top:115.00px;width:61.4px">95.005 A</div>
<div class="t v" style="left:914.2px;top:115.00px;width:61.4px">28.538 A</div>
<div class="gl" style="left:530.1px;top:142.09px;width:489.4px"></div>
<div class="st" style="left:562.3px;top:128.42px;width:418.7px;height:13.57px"></div>
<svg class="i" style="left:551.80px;top:128.82px" width="8" height="13" viewBox="0 0 8 13"><path d="M2.2 0.7 Q4.6 0.1 6.8 1.2 L5.5 4.3 L6.8 4.5 L4.9 7.9 L5.7 8.1 L0.9 12.5 L2.1 8.6 L1.0 8.4 L2.4 5 L1.1 4.6 Z" fill="url(#bg)" stroke="#bd9658" stroke-width="0.95" stroke-linejoin="round"/></svg>
<div class="t" style="left:563.9px;top:129.17px;letter-spacing:-0.338px">SoC Current (SVI2 TFN)</div>
<div class="t v" style="left:713.8px;top:129.17px;width:61.4px">6.912 A</div>
<div class="t v" style="left:780.6px;top:129.17px;width:61.4px">4.806 A</div>
<div class="t v" style="left:847.4px;top:129.17px;width:61.4px">7.039 A</div>
<div class="t v" style="left:914.2px;top:129.17px;width:61.4px">6.161 A</div>
<div class="gl" style="left:530.1px;top:156.26px;width:489.4px"></div>
<svg class="i" style="left:551.80px;top:142.99px" width="8" height="13" viewBox="0 0 8 13"><path d="M2.2 0.7 Q4.6 0.1 6.8 1.2 L5.5 4.3 L6.8 4.5 L4.9 7.9 L5.7 8.1 L0.9 12.5 L2.1 8.6 L1.0 8.4 L2.4 5 L1.1 4.6 Z" fill="url(#bg)" stroke="#bd9658" stroke-width="0.95" stroke-linejoin="round"/></svg>
<div class="t" style="left:563.9px;top:143.34px;letter-spacing:-0.766px">CPU TDC</div>
<div class="t v" style="left:713.8px;top:143.34px;width:61.4px">95.003 A</div>
<div class="t v" style="left:780.6px;top:143.34px;width:61.4px">5.438 A</div>
<div class="t v" style="left:847.4px;top:143.34px;width:61.4px">95.003 A</div>
<div class="t v" style="left:914.2px;top:143.34px;width:61.4px">28.533 A</div>
<div class="gl" style="left:530.1px;top:170.43px;width:489.4px"></div>
<div class="st" style="left:562.3px;top:156.76px;width:418.7px;height:13.57px"></div>
<svg class="i" style="left:551.80px;top:157.16px" width="8" height="13" viewBox="0 0 8 13"><path d="M2.2 0.7 Q4.6 0.1 6.8 1.2 L5.5 4.3 L6.8 4.5 L4.9 7.9 L5.7 8.1 L0.9 12.5 L2.1 8.6 L1.0 8.4 L2.4 5 L1.1 4.6 Z" fill="url(#bg)" stroke="#bd9658" stroke-width="0.95" stroke-linejoin="round"/></svg>
<div class="t" style="left:563.9px;top:157.51px;letter-spacing:-0.776px">CPU EDC</div>
<div class="t v" style="left:713.8px;top:157.51px;width:61.4px">140.000 A</div>
<div class="t v" style="left:780.6px;top:157.51px;width:61.4px">5.438 A</div>
<div class="t v" style="left:847.4px;top:157.51px;width:61.4px">140.000 A</div>
<div class="t v" style="left:914.2px;top:157.51px;width:61.4px">37.641 A</div>
<div class="gl" style="left:530.1px;top:184.60px;width:489.4px"></div>
<svg class="i" style="left:551.80px;top:171.33px" width="8" height="13" viewBox="0 0 8 13"><path d="M2.2 0.7 Q4.6 0.1 6.8 1.2 L5.5 4.3 L6.8 4.5 L4.9 7.9 L5.7 8.1 L0.9 12.5 L2.1 8.6 L1.0 8.4 L2.4 5 L1.1 4.6 Z" fill="url(#bg)" stroke="#bd9658" stroke-width="0.95" stroke-linejoin="round"/></svg>
<div class="t" style="left:563.9px;top:171.68px;letter-spacing:-0.387px">CPU Package Power</div>
<div class="t v" style="left:713.8px;top:171.68px;width:61.4px">140.293 W</div>
<div class="t v" style="left:780.6px;top:171.68px;width:61.4px">23.504 W</div>
<div class="t v" style="left:847.4px;top:171.68px;width:61.4px">140.293 W</div>
<div class="t v" style="left:914.2px;top:171.68px;width:61.4px">60.577 W</div>
<div class="gl" style="left:530.1px;top:198.77px;width:489.4px"></div>
<div class="st" style="left:575.5px;top:185.10px;width:405.5px;height:13.57px"></div>
<svg class="i" style="left:549.00px;top:189.50px" width="9" height="6" viewBox="0 0 9 6"><path d="M1.2 0.9 L4.4 4.3 L7.6 0.9" fill="none" stroke="#4e4e4e" stroke-width="1.15"/></svg>
<svg class="i" style="left:565.20px;top:185.50px" width="8" height="13" viewBox="0 0 8 13"><path d="M2.2 0.7 Q4.6 0.1 6.8 1.2 L5.5 4.3 L6.8 4.5 L4.9 7.9 L5.7 8.1 L0.9 12.5 L2.1 8.6 L1.0 8.4 L2.4 5 L1.1 4.6 Z" fill="url(#bg)" stroke="#bd9658" stroke-width="0.95" stroke-linejoin="round"/></svg>
<div class="t" style="left:577.1px;top:185.85px;letter-spacing:-0.300px">Core Powers</div>
<div class="t v" style="left:713.8px;top:185.85px;width:61.4px">9.133 W</div>
<div class="t v" style="left:780.6px;top:185.85px;width:61.4px">0.011 W</div>
<div class="t v" style="left:847.4px;top:185.85px;width:61.4px">9.608 W</div>
<div class="t v" style="left:914.2px;top:185.85px;width:61.4px">2.389 W</div>
<div class="gl" style="left:530.1px;top:212.94px;width:489.4px"></div>
<svg class="i" style="left:565.20px;top:199.67px" width="8" height="13" viewBox="0 0 8 13"><path d="M2.2 0.7 Q4.6 0.1 6.8 1.2 L5.5 4.3 L6.8 4.5 L4.9 7.9 L5.7 8.1 L0.9 12.5 L2.1 8.6 L1.0 8.4 L2.4 5 L1.1 4.6 Z" fill="url(#bg)" stroke="#bd9658" stroke-width="0.95" stroke-linejoin="round"/></svg>
<div class="t" style="left:577.1px;top:200.02px;letter-spacing:-0.302px">Core 0 Power</div>
<div class="t v" style="left:713.8px;top:200.02px;width:61.4px">9.409 W</div>
<div class="t v" style="left:780.6px;top:200.02px;width:61.4px">0.033 W</div>
<div class="t v" style="left:847.4px;top:200.02px;width:61.4px">9.434 W</div>
<div class="t v" style="left:914.2px;top:200.02px;width:61.4px">2.514 W</div>
<div class="gl" style="left:530.1px;top:227.11px;width:489.4px"></div>
<div class="st" style="left:575.5px;top:213.44px;width:405.5px;height:13.57px"></div>
<svg class="i" style="left:565.20px;top:213.84px" width="8" height="13" viewBox="0 0 8 13"><path d="M2.2 0.7 Q4.6 0.1 6.8 1.2 L5.5 4.3 L6.8 4.5 L4.9 7.9 L5.7 8.1 L0.9 12.5 L2.1 8.6 L1.0 8.4 L2.4 5 L1.1 4.6 Z" fill="url(#bg)" stroke="#bd9658" stroke-width="0.95" stroke-linejoin="round"/></svg>
<div class="t" style="left:577.1px;top:214.19px;letter-spacing:-0.302px">Core 1 Power</div>
<div class="t v" style="left:713.8px;top:214.19px;width:61.4px">9.398 W</div>
<div class="t v" style="left:780.6px;top:214.19px;width:61.4px">0.038 W</div>
<div class="t v" style="left:847.4px;top:214.19px;width:61.4px">9.401 W</div>
<div class="t v" style="left:914.2px;top:214.19px;width:61.4px">2.428 W</div>
<div class="gl" style="left:530.1px;top:241.28px;width:489.4px"></div>
<svg class="i" style="left:565.20px;top:228.01px" width="8" height="13" viewBox="0 0 8 13"><path d="M2.2 0.7 Q4.6 0.1 6.8 1.2 L5.5 4.3 L6.8 4.5 L4.9 7.9 L5.7 8.1 L0.9 12.5 L2.1 8.6 L1.0 8.4 L2.4 5 L1.1 4.6 Z" fill="url(#bg)" stroke="#bd9658" stroke-width="0.95" stroke-linejoin="round"/></svg>
<div class="t" style="left:577.1px;top:228.36px;letter-spacing:-0.302px">Core 2 Power</div>
<div class="t v" style="left:713.8px;top:228.36px;width:61.4px">9.377 W</div>
<div class="t v" style="left:780.6px;top:228.36px;width:61.4px">0.013 W</div>
<div class="t v" style="left:847.4px;top:228.36px;width:61.4px">9.510 W</div>
<div class="t v" style="left:914.2px;top:228.36px;width:61.4px">2.175 W</div>
<div class="gl" style="left:530.1px;top:255.45px;width:489.4px"></div>
<div class="sel" style="left:575.5px;top:241.88px;width:405.5px;height:13.17px"></div>
<svg class="i" style="left:565.20px;top:242.18px" width="8" height="13" viewBox="0 0 8 13"><path d="M2.2 0.7 Q4.6 0.1 6.8 1.2 L5.5 4.3 L6.8 4.5 L4.9 7.9 L5.7 8.1 L0.9 12.5 L2.1 8.6 L1.0 8.4 L2.4 5 L1.1 4.6 Z" fill="#86b4a0" stroke="#6486a8" stroke-width="0.95" stroke-linejoin="round"/></svg>
<div class="t w" style="left:577.1px;top:242.53px;letter-spacing:-0.302px">Core 3 Power</div>
<div class="t w v" style="left:713.8px;top:242.53px;width:61.4px">9.490 W</div>
<div class="t w v" style="left:780.6px;top:242.53px;width:61.4px">0.011 W</div>
<div class="t w v" style="left:847.4px;top:242.53px;width:61.4px">9.579 W</div>
<div class="t w v" style="left:914.2px;top:242.53px;width:61.4px">2.216 W</div>
<div class="gl" style="left:530.1px;top:269.62px;width:489.4px"></div>
<svg class="i" style="left:565.20px;top:256.35px" width="8" height="13" viewBox="0 0 8 13"><path d="M2.2 0.7 Q4.6 0.1 6.8 1.2 L5.5 4.3 L6.8 4.5 L4.9 7.9 L5.7 8.1 L0.9 12.5 L2.1 8.6 L1.0 8.4 L2.4 5 L1.1 4.6 Z" fill="url(#bg)" stroke="#bd9658" stroke-width="0.95" stroke-linejoin="round"/></svg>
<div class="t" style="left:577.1px;top:256.70px;letter-spacing:-0.302px">Core 4 Power</div>
<div class="t v" style="left:713.8px;top:256.70px;width:61.4px">9.327 W</div>
<div class="t v" style="left:780.6px;top:256.70px;width:61.4px">0.039 W</div>
<div class="t v" style="left:847.4px;top:256.70px;width:61.4px">9.395 W</div>
<div class="t v" style="left:914.2px;top:256.70px;width:61.4px">3.287 W</div>
<div class="gl" style="left:530.1px;top:283.79px;width:489.4px"></div>
<div class="st" style="left:575.5px;top:270.12px;width:405.5px;height:13.57px"></div>
<svg class="i" style="left:565.20px;top:270.52px" width="8" height="13" viewBox="0 0 8 13"><path d="M2.2 0.7 Q4.6 0.1 6.8 1.2 L5.5 4.3 L6.8 4.5 L4.9 7.9 L5.7 8.1 L0.9 12.5 L2.1 8.6 L1.0 8.4 L2.4 5 L1.1 4.6 Z" fill="url(#bg)" stroke="#bd9658" stroke-width="0.95" stroke-linejoin="round"/></svg>
<div class="t" style="left:577.1px;top:270.87px;letter-spacing:-0.302px">Core 5 Power</div>
<div class="t v" style="left:713.8px;top:270.87px;width:61.4px">9.526 W</div>
<div class="t v" style="left:780.6px;top:270.87px;width:61.4px">0.012 W</div>
<div class="t v" style="left:847.4px;top:270.87px;width:61.4px">9.608 W</div>
<div class="t v" style="left:914.2px;top:270.87px;width:61.4px">2.197 W</div>
<div class="gl" style="left:530.1px;top:297.96px;width:489.4px"></div>
<svg class="i" style="left:565.20px;top:284.69px" width="8" height="13" viewBox="0 0 8 13"><path d="M2.2 0.7 Q4.6 0.1 6.8 1.2 L5.5 4.3 L6.8 4.5 L4.9 7.9 L5.7 8.1 L0.9 12.5 L2.1 8.6 L1.0 8.4 L2.4 5 L1.1 4.6 Z" fill="url(#bg)" stroke="#bd9658" stroke-width="0.95" stroke-linejoin="round"/></svg>
<div class="t" style="left:577.1px;top:285.04px;letter-spacing:-0.302px">Core 6 Power</div>
<div class="t v" style="left:713.8px;top:285.04px;width:61.4px">8.656 W</div>
<div class="t v" style="left:780.6px;top:285.04px;width:61.4px">0.406 W</div>
<div class="t v" style="left:847.4px;top:285.04px;width:61.4px">8.801 W</div>
<div class="t v" style="left:914.2px;top:285.04px;width:61.4px">3.314 W</div>
<div class="gl" style="left:530.1px;top:312.13px;width:489.4px"></div>
<div class="st" style="left:575.5px;top:298.46px;width:405.5px;height:13.57px"></div>
<svg class="i" style="left:565.20px;top:298.86px" width="8" height="13" viewBox="0 0 8 13"><path d="M2.2 0.7 Q4.6 0.1 6.8 1.2 L5.5 4.3 L6.8 4.5 L4.9 7.9 L5.7 8.1 L0.9 12.5 L2.1 8.6 L1.0 8.4 L2.4 5 L1.1 4.6 Z" fill="url(#bg)" stroke="#bd9658" stroke-width="0.95" stroke-linejoin="round"/></svg>
<div class="t" style="left:577.1px;top:299.21px;letter-spacing:-0.302px">Core 7 Power</div>
<div class="t v" style="left:713.8px;top:299.21px;width:61.4px">8.775 W</div>
<div class="t v" style="left:780.6px;top:299.21px;width:61.4px">0.064 W</div>
<div class="t v" style="left:847.4px;top:299.21px;width:61.4px">8.835 W</div>
<div class="t v" style="left:914.2px;top:299.21px;width:61.4px">2.170 W</div>
<div class="gl" style="left:530.1px;top:326.30px;width:489.4px"></div>
<svg class="i" style="left:565.20px;top:313.03px" width="8" height="13" viewBox="0 0 8 13"><path d="M2.2 0.7 Q4.6 0.1 6.8 1.2 L5.5 4.3 L6.8 4.5 L4.9 7.9 L5.7 8.1 L0.9 12.5 L2.1 8.6 L1.0 8.4 L2.4 5 L1.1 4.6 Z" fill="url(#bg)" stroke="#bd9658" stroke-width="0.95" stroke-linejoin="round"/></svg>
<div class="t" style="left:577.1px;top:313.38px;letter-spacing:-0.302px">Core 8 Power</div>
<div class="t v" style="left:713.8px;top:313.38px;width:61.4px">8.886 W</div>
<div class="t v" style="left:780.6px;top:313.38px;width:61.4px">0.041 W</div>
<div class="t v" style="left:847.4px;top:313.38px;width:61.4px">9.004 W</div>
<div class="t v" style="left:914.2px;top:313.38px;width:61.4px">2.017 W</div>
<div class="gl" style="left:530.1px;top:340.47px;width:489.4px"></div>
<div class="st" style="left:575.5px;top:326.80px;width:405.5px;height:13.57px"></div>
<svg class="i" style="left:565.20px;top:327.20px" width="8" height="13" viewBox="0 0 8 13"><path d="M2.2 0.7 Q4.6 0.1 6.8 1.2 L5.5 4.3 L6.8 4.5 L4.9 7.9 L5.7 8.1 L0.9 12.5 L2.1 8.6 L1.0 8.4 L2.4 5 L1.1 4.6 Z" fill="url(#bg)" stroke="#bd9658" stroke-width="0.95" stroke-linejoin="round"/></svg>
<div class="t" style="left:577.1px;top:327.55px;letter-spacing:-0.302px">Core 9 Power</div>
<div class="t v" style="left:713.8px;top:327.55px;width:61.4px">8.867 W</div>
<div class="t v" style="left:780.6px;top:327.55px;width:61.4px">0.027 W</div>
<div class="t v" style="left:847.4px;top:327.55px;width:61.4px">8.990 W</div>
<div class="t v" style="left:914.2px;top:327.55px;width:61.4px">2.059 W</div>
<div class="gl" style="left:530.1px;top:354.64px;width:489.4px"></div>
<svg class="i" style="left:565.20px;top:341.37px" width="8" height="13" viewBox="0 0 8 13"><path d="M2.2 0.7 Q4.6 0.1 6.8 1.2 L5.5 4.3 L6.8 4.5 L4.9 7.9 L5.7 8.1 L0.9 12.5 L2.1 8.6 L1.0 8.4 L2.4 5 L1.1 4.6 Z" fill="url(#bg)" stroke="#bd9658" stroke-width="0.95" stroke-linejoin="round"/></svg>
<div class="t" style="left:577.1px;top:341.72px;letter-spacing:-0.270px">Core 10 Power</div>
<div class="t v" style="left:713.8px;top:341.72px;width:61.4px">8.918 W</div>
<div class="t v" style="left:780.6px;top:341.72px;width:61.4px">0.039 W</div>
<div class="t v" style="left:847.4px;top:341.72px;width:61.4px">8.918 W</div>
<div class="t v" style="left:914.2px;top:341.72px;width:61.4px">2.116 W</div>
<div class="gl" style="left:530.1px;top:368.81px;width:489.4px"></div>
<div class="st" style="left:575.5px;top:355.14px;width:405.5px;height:13.57px"></div>
<svg class="i" style="left:565.20px;top:355.54px" width="8" height="13" viewBox="0 0 8 13"><path d="M2.2 0.7 Q4.6 0.1 6.8 1.2 L5.5 4.3 L6.8 4.5 L4.9 7.9 L5.7 8.1 L0.9 12.5 L2.1 8.6 L1.0 8.4 L2.4 5 L1.1 4.6 Z" fill="url(#bg)" stroke="#bd9658" stroke-width="0.95" stroke-linejoin="round"/></svg>
<div class="t" style="left:577.1px;top:355.89px;letter-spacing:-0.270px">Core 11 Power</div>
<div class="t v" style="left:713.8px;top:355.89px;width:61.4px">8.965 W</div>
<div class="t v" style="left:780.6px;top:355.89px;width:61.4px">0.032 W</div>
<div class="t v" style="left:847.4px;top:355.89px;width:61.4px">8.965 W</div>
<div class="t v" style="left:914.2px;top:355.89px;width:61.4px">2.178 W</div>
<div class="gl" style="left:530.1px;top:382.98px;width:489.4px"></div>
<svg class="i" style="left:551.80px;top:369.71px" width="8" height="13" viewBox="0 0 8 13"><path d="M2.2 0.7 Q4.6 0.1 6.8 1.2 L5.5 4.3 L6.8 4.5 L4.9 7.9 L5.7 8.1 L0.9 12.5 L2.1 8.6 L1.0 8.4 L2.4 5 L1.1 4.6 Z" fill="url(#bg)" stroke="#bd9658" stroke-width="0.95" stroke-linejoin="round"/></svg>
<div class="t" style="left:563.9px;top:370.06px;letter-spacing:-0.390px">CPU Core Power (SVI2 TFN)</div>
<div class="t v" style="left:713.8px;top:370.06px;width:61.4px">112.861 W</div>
<div class="t v" style="left:780.6px;top:370.06px;width:61.4px">3.289 W</div>
<div class="t v" style="left:847.4px;top:370.06px;width:61.4px">112.865 W</div>
<div class="t v" style="left:914.2px;top:370.06px;width:61.4px">34.823 W</div>
<div class="gl" style="left:530.1px;top:397.15px;width:489.4px"></div>
<div class="st" style="left:562.3px;top:383.48px;width:418.7px;height:13.57px"></div>
<svg class="i" style="left:551.80px;top:383.88px" width="8" height="13" viewBox="0 0 8 13"><path d="M2.2 0.7 Q4.6 0.1 6.8 1.2 L5.5 4.3 L6.8 4.5 L4.9 7.9 L5.7 8.1 L0.9 12.5 L2.1 8.6 L1.0 8.4 L2.4 5 L1.1 4.6 Z" fill="url(#bg)" stroke="#bd9658" stroke-width="0.95" stroke-linejoin="round"/></svg>
<div class="t" style="left:563.9px;top:384.23px;letter-spacing:-0.428px">CPU SoC Power (SVI2 TFN)</div>
<div class="t v" style="left:713.8px;top:384.23px;width:61.4px">6.770 W</div>
<div class="t v" style="left:780.6px;top:384.23px;width:61.4px">4.716 W</div>
<div class="t v" style="left:847.4px;top:384.23px;width:61.4px">6.892 W</div>
<div class="t v" style="left:914.2px;top:384.23px;width:61.4px">6.042 W</div>
<div class="gl" style="left:530.1px;top:411.32px;width:489.4px"></div>
<svg class="i" style="left:551.80px;top:398.05px" width="8" height="13" viewBox="0 0 8 13"><path d="M2.2 0.7 Q4.6 0.1 6.8 1.2 L5.5 4.3 L6.8 4.5 L4.9 7.9 L5.7 8.1 L0.9 12.5 L2.1 8.6 L1.0 8.4 L2.4 5 L1.1 4.6 Z" fill="url(#bg)" stroke="#bd9658" stroke-width="0.95" stroke-linejoin="round"/></svg>
<div class="t" style="left:563.9px;top:398.40px;letter-spacing:-0.285px">Core+SoC Power (SVI2 TFN)</div>
<div class="t v" style="left:713.8px;top:398.40px;width:61.4px">119.631 W</div>
<div class="t v" style="left:780.6px;top:398.40px;width:61.4px">8.037 W</div>
<div class="t v" style="left:847.4px;top:398.40px;width:61.4px">119.654 W</div>
<div class="t v" style="left:914.2px;top:398.40px;width:61.4px">40.865 W</div>
<div class="gl" style="left:530.1px;top:425.49px;width:489.4px"></div>
<div class="st" style="left:562.3px;top:411.82px;width:418.7px;height:13.57px"></div>
<svg class="i" style="left:551.80px;top:412.22px" width="8" height="13" viewBox="0 0 8 13"><path d="M2.2 0.7 Q4.6 0.1 6.8 1.2 L5.5 4.3 L6.8 4.5 L4.9 7.9 L5.7 8.1 L0.9 12.5 L2.1 8.6 L1.0 8.4 L2.4 5 L1.1 4.6 Z" fill="url(#bg)" stroke="#bd9658" stroke-width="0.95" stroke-linejoin="round"/></svg>
<div class="t" style="left:563.9px;top:412.57px;letter-spacing:-0.748px">CPU PPT</div>
<div class="t v" style="left:713.8px;top:412.57px;width:61.4px">140.562 W</div>
<div class="t v" style="left:780.6px;top:412.57px;width:61.4px">23.565 W</div>
<div class="t v" style="left:847.4px;top:412.57px;width:61.4px">140.562 W</div>
<div class="t v" style="left:914.2px;top:412.57px;width:61.4px">60.727 W</div>
<div class="gl" style="left:530.1px;top:439.66px;width:489.4px"></div>
<svg class="i" style="left:550.30px;top:427.49px" width="11" height="11" viewBox="0 0 11 11"><circle cx="5.5" cy="5.5" r="4.55" fill="url(#cg)" stroke="#484848" stroke-width="1.4"/><path d="M3.1 4.9 L6.3 5.7" stroke="#5c5c5c" stroke-width="1.1" fill="none"/></svg>
<div class="t" style="left:563.9px;top:426.74px;letter-spacing:-0.241px">Infinity Fabric Clock (FCLK)</div>
<div class="t v" style="left:713.8px;top:426.74px;width:61.4px">1,600.0 MHz</div>
<div class="t v" style="left:780.6px;top:426.74px;width:61.4px">1,113.1 MHz</div>
<div class="t v" style="left:847.4px;top:426.74px;width:61.4px">1,600.0 MHz</div>
<div class="t v" style="left:914.2px;top:426.74px;width:61.4px">1,520.6 MHz</div>
<div class="gl" style="left:530.1px;top:453.83px;width:489.4px"></div>
<div class="st" style="left:562.3px;top:440.16px;width:418.7px;height:13.57px"></div>
<svg class="i" style="left:550.30px;top:441.66px" width="11" height="11" viewBox="0 0 11 11"><circle cx="5.5" cy="5.5" r="4.55" fill="url(#cg)" stroke="#484848" stroke-width="1.4"/><path d="M3.1 4.9 L6.3 5.7" stroke="#5c5c5c" stroke-width="1.1" fill="none"/></svg>
<div class="t" style="left:563.9px;top:440.91px;letter-spacing:-0.270px">Memory Controller Clock (UCLK)</div>
<div class="t v" style="left:713.8px;top:440.91px;width:61.4px">1,600.0 MHz</div>
<div class="t v" style="left:780.6px;top:440.91px;width:61.4px">1,113.1 MHz</div>
<div class="t v" style="left:847.4px;top:440.91px;width:61.4px">1,600.0 MHz</div>
<div class="t v" style="left:914.2px;top:440.91px;width:61.4px">1,520.6 MHz</div>
<div class="gl" style="left:530.1px;top:468.00px;width:489.4px"></div>
<svg class="i" style="left:550.30px;top:455.83px" width="11" height="11" viewBox="0 0 11 11"><circle cx="5.5" cy="5.5" r="4.55" fill="url(#cg)" stroke="#484848" stroke-width="1.4"/><path d="M3.1 4.9 L6.3 5.7" stroke="#5c5c5c" stroke-width="1.1" fill="none"/></svg>
<div class="t" style="left:563.9px;top:455.08px;letter-spacing:-0.221px">Frequency Limit - Global</div>
<div class="t v" style="left:713.8px;top:455.08px;width:61.4px">4,448.5 MHz</div>
<div class="t v" style="left:780.6px;top:455.08px;width:61.4px">4,443.1 MHz</div>
<div class="t v" style="left:847.4px;top:455.08px;width:61.4px">5,037.7 MHz</div>
<div class="t v" style="left:914.2px;top:455.08px;width:61.4px">4,862.9 MHz</div>
<div class="gl" style="left:530.1px;top:482.17px;width:489.4px"></div>
<div class="st" style="left:562.3px;top:468.50px;width:418.7px;height:13.57px"></div>
<svg class="i" style="left:550.30px;top:470.00px" width="11" height="11" viewBox="0 0 11 11"><circle cx="5.5" cy="5.5" r="4.55" fill="url(#cg)" stroke="#484848" stroke-width="1.4"/><path d="M3.1 4.9 L6.3 5.7" stroke="#5c5c5c" stroke-width="1.1" fill="none"/></svg>
<div class="t" style="left:563.9px;top:469.25px;letter-spacing:-0.529px">CPU PPT Limit</div>
<div class="t v" style="left:713.8px;top:469.25px;width:61.4px">99.0 %</div>
<div class="t v" style="left:780.6px;top:469.25px;width:61.4px">16.6 %</div>
<div class="t v" style="left:847.4px;top:469.25px;width:61.4px">99.0 %</div>
<div class="t v" style="left:914.2px;top:469.25px;width:61.4px">42.8 %</div>
<div class="gl" style="left:530.1px;top:496.34px;width:489.4px"></div>
<svg class="i" style="left:550.30px;top:484.17px" width="11" height="11" viewBox="0 0 11 11"><circle cx="5.5" cy="5.5" r="4.55" fill="url(#cg)" stroke="#484848" stroke-width="1.4"/><path d="M3.1 4.9 L6.3 5.7" stroke="#5c5c5c" stroke-width="1.1" fill="none"/></svg>
<div class="t" style="left:563.9px;top:483.42px;letter-spacing:-0.539px">CPU TDC Limit</div>
<div class="t v" style="left:713.8px;top:483.42px;width:61.4px">100.0 %</div>
<div class="t v" style="left:780.6px;top:483.42px;width:61.4px">5.7 %</div>
<div class="t v" style="left:847.4px;top:483.42px;width:61.4px">100.0 %</div>
<div class="t v" style="left:914.2px;top:483.42px;width:61.4px">30.0 %</div>
<div class="gl" style="left:530.1px;top:510.51px;width:489.4px"></div>
<div class="st" style="left:562.3px;top:496.84px;width:418.7px;height:13.57px"></div>
<svg class="i" style="left:550.30px;top:498.34px" width="11" height="11" viewBox="0 0 11 11"><circle cx="5.5" cy="5.5" r="4.55" fill="url(#cg)" stroke="#484848" stroke-width="1.4"/><path d="M3.1 4.9 L6.3 5.7" stroke="#5c5c5c" stroke-width="1.1" fill="none"/></svg>
<div class="t" style="left:563.9px;top:497.59px;letter-spacing:-0.544px">CPU EDC Limit</div>
<div class="t v" style="left:713.8px;top:497.59px;width:61.4px">100.0 %</div>
<div class="t v" style="left:780.6px;top:497.59px;width:61.4px">3.9 %</div>
<div class="t v" style="left:847.4px;top:497.59px;width:61.4px">100.0 %</div>
<div class="t v" style="left:914.2px;top:497.59px;width:61.4px">26.9 %</div>
<div class="gl" style="left:530.1px;top:524.68px;width:489.4px"></div>
<svg class="i" style="left:550.30px;top:512.51px" width="11" height="11" viewBox="0 0 11 11"><circle cx="5.5" cy="5.5" r="4.55" fill="url(#cg)" stroke="#484848" stroke-width="1.4"/><path d="M3.1 4.9 L6.3 5.7" stroke="#5c5c5c" stroke-width="1.1" fill="none"/></svg>
<div class="t" style="left:563.9px;top:511.76px;letter-spacing:-0.150px">Power Reporting Deviation (Accur...</div>
<div class="t v" style="left:713.8px;top:511.76px;width:61.4px">102.7 %</div>
<div class="t v" style="left:780.6px;top:511.76px;width:61.4px">102.2 %</div>
<div class="t v" style="left:847.4px;top:511.76px;width:61.4px">308.8 %</div>
<div class="t v" style="left:914.2px;top:511.76px;width:61.4px">189.1 %</div>
<div class="gl" style="left:530.1px;top:538.85px;width:489.4px"></div>
<div class="st" style="left:562.3px;top:525.18px;width:418.7px;height:13.57px"></div>
<svg class="i" style="left:550.30px;top:526.68px" width="11" height="11" viewBox="0 0 11 11"><circle cx="5.5" cy="5.5" r="4.55" fill="url(#cg)" stroke="#484848" stroke-width="1.4"/><path d="M3.1 4.9 L6.3 5.7" stroke="#5c5c5c" stroke-width="1.1" fill="none"/></svg>
<div class="t" style="left:563.9px;top:525.93px;letter-spacing:-0.216px">Thermal Throttling (HTC)</div>
<div class="t v" style="left:713.8px;top:525.93px;width:61.4px">No</div>
<div class="t v" style="left:780.6px;top:525.93px;width:61.4px">No</div>
<div class="t v" style="left:847.4px;top:525.93px;width:61.4px">No</div>
<div class="gl" style="left:530.1px;top:553.02px;width:489.4px"></div>
<svg class="i" style="left:550.30px;top:540.85px" width="11" height="11" viewBox="0 0 11 11"><circle cx="5.5" cy="5.5" r="4.55" fill="url(#cg)" stroke="#484848" stroke-width="1.4"/><path d="M3.1 4.9 L6.3 5.7" stroke="#5c5c5c" stroke-width="1.1" fill="none"/></svg>
<div class="t" style="left:563.9px;top:540.10px;letter-spacing:-0.361px">Thermal Throttling (PROCHOT CPU)</div>
<div class="t v" style="left:713.8px;top:540.10px;width:61.4px">No</div>
<div class="t v" style="left:780.6px;top:540.10px;width:61.4px">No</div>
<div class="t v" style="left:847.4px;top:540.10px;width:61.4px">No</div>
<div class="gl" style="left:530.1px;top:567.19px;width:489.4px"></div>
<div class="st" style="left:562.3px;top:553.52px;width:418.7px;height:13.57px"></div>
<svg class="i" style="left:550.30px;top:555.02px" width="11" height="11" viewBox="0 0 11 11"><circle cx="5.5" cy="5.5" r="4.55" fill="url(#cg)" stroke="#484848" stroke-width="1.4"/><path d="M3.1 4.9 L6.3 5.7" stroke="#5c5c5c" stroke-width="1.1" fill="none"/></svg>
<div class="t" style="left:563.9px;top:554.27px;letter-spacing:-0.355px">Thermal Throttling (PROCHOT EXT)</div>
<div class="t v" style="left:713.8px;top:554.27px;width:61.4px">No</div>
<div class="t v" style="left:780.6px;top:554.27px;width:61.4px">No</div>
<div class="t v" style="left:847.4px;top:554.27px;width:61.4px">No</div>
<div class="gl" style="left:530.1px;top:581.36px;width:489.4px"></div>
<svg class="i" style="left:550.30px;top:569.19px" width="11" height="11" viewBox="0 0 11 11"><circle cx="5.5" cy="5.5" r="4.55" fill="url(#cg)" stroke="#484848" stroke-width="1.4"/><path d="M3.1 4.9 L6.3 5.7" stroke="#5c5c5c" stroke-width="1.1" fill="none"/></svg>
<div class="t" style="left:563.9px;top:568.44px;letter-spacing:-0.404px">DRAM Read Bandwidth</div>
<div class="t v" style="left:713.8px;top:568.44px;width:61.4px">0.939 Gbps</div>
<div class="t v" style="left:780.6px;top:568.44px;width:61.4px">0.126 Gbps</div>
<div class="t v" style="left:847.4px;top:568.44px;width:61.4px">4.224 Gbps</div>
<div class="t v" style="left:914.2px;top:568.44px;width:61.4px">0.633 Gbps</div>
<div class="gl" style="left:530.1px;top:595.53px;width:489.4px"></div>
<div class="st" style="left:562.3px;top:581.86px;width:418.7px;height:13.57px"></div>
<svg class="i" style="left:550.30px;top:583.36px" width="11" height="11" viewBox="0 0 11 11"><circle cx="5.5" cy="5.5" r="4.55" fill="url(#cg)" stroke="#484848" stroke-width="1.4"/><path d="M3.1 4.9 L6.3 5.7" stroke="#5c5c5c" stroke-width="1.1" fill="none"/></svg>
<div class="t" style="left:563.9px;top:582.61px;letter-spacing:-0.393px">DRAM Write Bandwidth</div>
<div class="t v" style="left:713.8px;top:582.61px;width:61.4px">0.064 Gbps</div>
<div class="t v" style="left:780.6px;top:582.61px;width:61.4px">0.019 Gbps</div>
<div class="t v" style="left:847.4px;top:582.61px;width:61.4px">1.512 Gbps</div>
<div class="t v" style="left:914.2px;top:582.61px;width:61.4px">0.180 Gbps</div>
<div class="gl" style="left:530.1px;top:609.70px;width:489.4px"></div>
<div class="gl" style="left:530.1px;top:623.87px;width:489.4px"></div>
<div class="hd" style="left:562.8px;top:610.20px;width:418.2px;height:13.32px"></div>
<svg class="i" style="left:536.40px;top:614.60px" width="9" height="6" viewBox="0 0 9 6"><path d="M1.2 0.9 L4.4 4.3 L7.6 0.9" fill="none" stroke="#4e4e4e" stroke-width="1.15"/></svg>
<svg class="i" style="left:550.40px;top:610.70px" width="11" height="12" viewBox="0 0 10.4 11.4"><rect x="0" y="1.6" width="10.4" height="0.8" fill="#8a8a8a"/><rect x="0" y="3.4" width="10.4" height="0.8" fill="#8a8a8a"/><rect x="0" y="5.1" width="10.4" height="0.8" fill="#8a8a8a"/><rect x="0" y="6.8" width="10.4" height="0.8" fill="#8a8a8a"/><rect x="0" y="8.6" width="10.4" height="0.8" fill="#8a8a8a"/><rect x="1.6" y="0.3" width="7.1" height="10.8" rx="0.8" fill="#3c3c3c"/><rect x="4.3" y="0.6" width="1.4" height="10.2" fill="#555"/></svg>
<div class="t it" style="left:564.9px;top:610.95px;letter-spacing:-0.53px">GIGABYTE B550 AORUS MASTER (...</div>
<div class="gl" style="left:530.1px;top:638.04px;width:489.4px"></div>
<svg class="i" style="left:550.80px;top:624.07px" width="8" height="14" viewBox="0 0 8 14"><path d="M1.6 3.0 a2.4 2.4 0 0 1 4.8 0 V8.6 a2.85 2.85 0 1 1 -4.8 0 Z" fill="url(#tg)" stroke="#97a3ad" stroke-width="0.9"/><path d="M3.2 6.4 h1.6 v2.6 a1.8 1.8 0 1 1 -1.6 0 Z" fill="#cc8444" opacity=".9"/></svg>
<div class="t" style="left:563.9px;top:625.12px;letter-spacing:-0.198px">System1</div>
<div class="t v" style="left:713.8px;top:625.12px;width:61.4px">28 °C</div>
<div class="t v" style="left:780.6px;top:625.12px;width:61.4px">28 °C</div>
<div class="t v" style="left:847.4px;top:625.12px;width:61.4px">29 °C</div>
<div class="t v" style="left:914.2px;top:625.12px;width:61.4px">28 °C</div>
<div class="st" style="left:562.3px;top:638.54px;width:418.7px;height:11.76px"></div>
<svg class="i" style="left:550.80px;top:638.24px" width="8" height="14" viewBox="0 0 8 14"><path d="M1.6 3.0 a2.4 2.4 0 0 1 4.8 0 V8.6 a2.85 2.85 0 1 1 -4.8 0 Z" fill="url(#tg)" stroke="#97a3ad" stroke-width="0.9"/><path d="M3.2 6.4 h1.6 v2.6 a1.8 1.8 0 1 1 -1.6 0 Z" fill="#cc8444" opacity=".9"/></svg>
<div class="t" style="left:563.9px;top:639.29px;letter-spacing:-0.809px">CPU</div>
<div class="t v" style="left:713.8px;top:639.29px;width:61.4px">67 °C</div>
<div class="t v" style="left:780.6px;top:639.29px;width:61.4px">40 °C</div>
<div class="t v" style="left:847.4px;top:639.29px;width:61.4px">67 °C</div>
<div class="t v" style="left:914.2px;top:639.29px;width:61.4px">52 °C</div>
<div class="cs" style="left:713.3px;top:44px;height:606.3px"></div>
<div class="cs" style="left:780.1px;top:44px;height:606.3px"></div>
<div class="cs" style="left:846.9px;top:44px;height:606.3px"></div>
<div class="cs" style="left:913.7px;top:44px;height:606.3px"></div>
<div class="cs" style="left:980.5px;top:44px;height:606.3px"></div>
</div>
</div>
</body></html>
